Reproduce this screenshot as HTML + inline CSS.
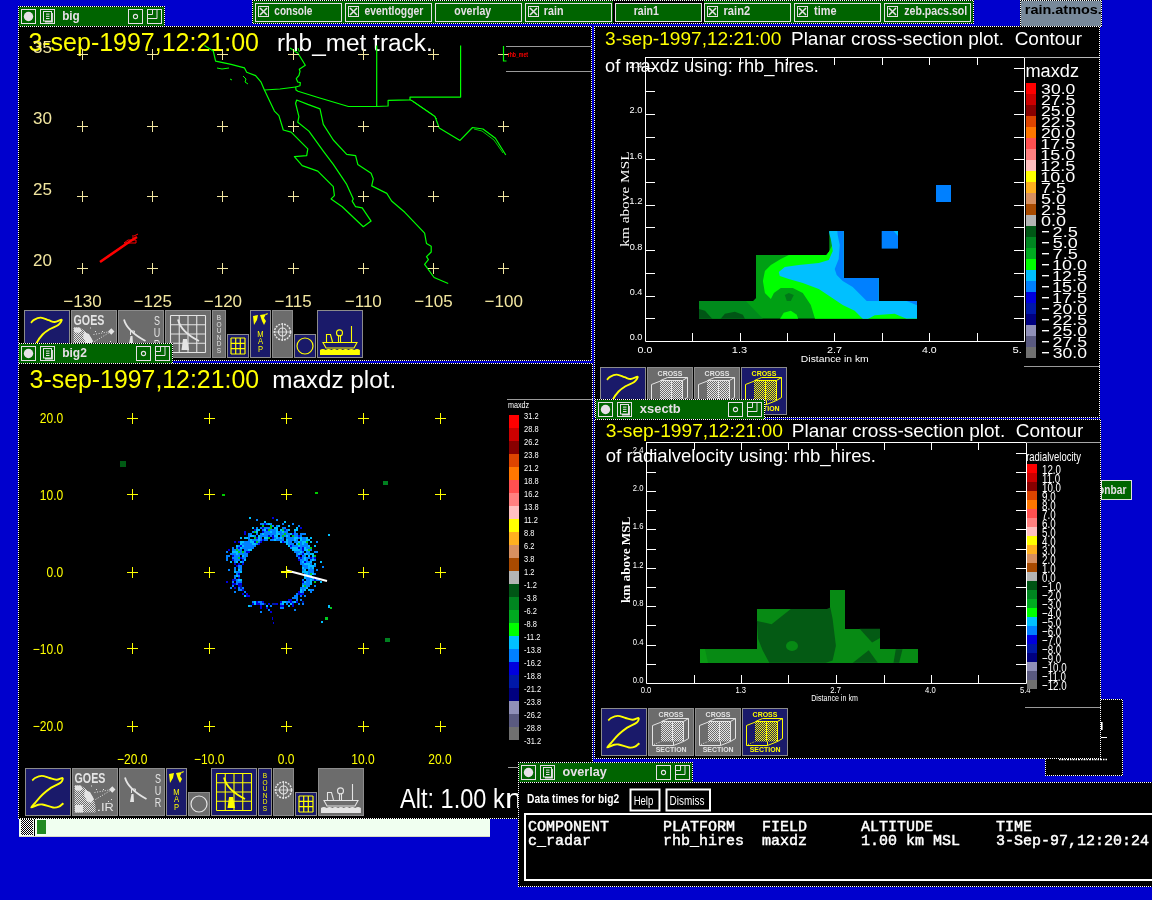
<!DOCTYPE html>
<html><head><meta charset="utf-8"><style>html,body{margin:0;padding:0;background:#0000cd;overflow:hidden}svg{display:block;will-change:transform}</style></head>
<body><svg width="1152" height="900" viewBox="0 0 1152 900">
<defs><pattern id="dots" width="2" height="2" patternUnits="userSpaceOnUse"><rect width="2" height="2" fill="#000"/><rect width="1" height="1" fill="#fff"/><rect x="1" y="1" width="1" height="1" fill="#fff"/></pattern><pattern id="dg" width="2" height="2" patternUnits="userSpaceOnUse"><rect width="1" height="1" fill="#e4e4e4"/><rect x="1" y="1" width="1" height="1" fill="#e4e4e4"/></pattern><pattern id="dy" width="2" height="2" patternUnits="userSpaceOnUse"><rect width="1" height="1" fill="#ffff00"/><rect x="1" y="1" width="1" height="1" fill="#ffff00"/></pattern></defs>
<rect width="1152" height="900" fill="#0000cd"/>
<rect x="252" y="0" width="722" height="24" fill="#006400"/>
<path d="M252 0h722v1h-722zM252 23h722v1h-722zM252 0h1v24h-1zM973 0h1v24h-1z" fill="url(#dots)"/>
<rect x="255.5" y="3.5" width="86" height="18" fill="none" stroke="#e6e0e6" stroke-width="1"/>
<rect x="258.5" y="6.5" width="10" height="10" fill="none" stroke="#e6e0e6" stroke-width="1"/>
<path d="M260 8l7 7M267 8l-7 7" stroke="#e6e0e6" stroke-width="1.6"/>
<text x="0" y="0" font-family="Liberation Sans" font-size="12.5" font-weight="bold" fill="#e6e0e6" transform="translate(274.30 15) scale(0.8065 1)" xml:space="preserve" >console</text>
<rect x="345.5" y="3.5" width="86" height="18" fill="none" stroke="#e6e0e6" stroke-width="1"/>
<rect x="348.5" y="6.5" width="10" height="10" fill="none" stroke="#e6e0e6" stroke-width="1"/>
<path d="M350 8l7 7M357 8l-7 7" stroke="#e6e0e6" stroke-width="1.6"/>
<text x="0" y="0" font-family="Liberation Sans" font-size="12.5" font-weight="bold" fill="#e6e0e6" transform="translate(364.59 15) scale(0.8285 1)" xml:space="preserve" >eventlogger</text>
<rect x="435.5" y="3.5" width="86" height="18" fill="none" stroke="#e6e0e6" stroke-width="1"/>
<text x="0" y="0" font-family="Liberation Sans" font-size="12.5" font-weight="bold" fill="#e6e0e6" transform="translate(454.28 15) scale(0.8439 1)" xml:space="preserve" >overlay</text>
<rect x="525.5" y="3.5" width="86" height="18" fill="none" stroke="#e6e0e6" stroke-width="1"/>
<rect x="528.5" y="6.5" width="10" height="10" fill="none" stroke="#e6e0e6" stroke-width="1"/>
<path d="M530 8l7 7M537 8l-7 7" stroke="#e6e0e6" stroke-width="1.6"/>
<text x="0" y="0" font-family="Liberation Sans" font-size="12.5" font-weight="bold" fill="#e6e0e6" transform="translate(543.85 15) scale(0.8565 1)" xml:space="preserve" >rain</text>
<rect x="615.5" y="3.5" width="86" height="18" fill="none" stroke="#e6e0e6" stroke-width="1"/>
<rect x="614.0" y="2.0" width="89" height="20" fill="none" stroke="#000" stroke-width="2"/>
<rect x="615.5" y="3.5" width="86" height="18" fill="none" stroke="#e6e0e6" stroke-width="1"/>
<text x="0" y="0" font-family="Liberation Sans" font-size="12.5" font-weight="bold" fill="#e6e0e6" transform="translate(633.66 15) scale(0.8454 1)" xml:space="preserve" >rain1</text>
<rect x="704.5" y="3.5" width="86" height="18" fill="none" stroke="#e6e0e6" stroke-width="1"/>
<rect x="707.5" y="6.5" width="10" height="10" fill="none" stroke="#e6e0e6" stroke-width="1"/>
<path d="M709 8l7 7M716 8l-7 7" stroke="#e6e0e6" stroke-width="1.6"/>
<text x="0" y="0" font-family="Liberation Sans" font-size="12.5" font-weight="bold" fill="#e6e0e6" transform="translate(723.52 15) scale(0.8947 1)" xml:space="preserve" >rain2</text>
<rect x="794.5" y="3.5" width="86" height="18" fill="none" stroke="#e6e0e6" stroke-width="1"/>
<rect x="797.5" y="6.5" width="10" height="10" fill="none" stroke="#e6e0e6" stroke-width="1"/>
<path d="M799 8l7 7M806 8l-7 7" stroke="#e6e0e6" stroke-width="1.6"/>
<text x="0" y="0" font-family="Liberation Sans" font-size="12.5" font-weight="bold" fill="#e6e0e6" transform="translate(814.09 15) scale(0.8716 1)" xml:space="preserve" >time</text>
<rect x="884.5" y="3.5" width="86" height="18" fill="none" stroke="#e6e0e6" stroke-width="1"/>
<rect x="887.5" y="6.5" width="10" height="10" fill="none" stroke="#e6e0e6" stroke-width="1"/>
<path d="M889 8l7 7M896 8l-7 7" stroke="#e6e0e6" stroke-width="1.6"/>
<text x="0" y="0" font-family="Liberation Sans" font-size="12.5" font-weight="bold" fill="#e6e0e6" transform="translate(904.28 15) scale(0.8479 1)" xml:space="preserve" >zeb.pacs.sol</text>
<rect x="1020" y="0" width="82" height="27" fill="#778899"/>
<path d="M1020 0h82v1h-82zM1020 26h82v1h-82zM1020 0h1v27h-1zM1101 0h1v27h-1z" fill="url(#dots)"/>
<text x="0" y="0" font-family="Liberation Sans" font-size="12.5" font-weight="bold" fill="#000" transform="translate(1024.79 13.7) scale(1.1569 1)" xml:space="preserve" >rain.atmos.</text>
<rect x="18" y="26" width="574" height="335" fill="#000"/>
<path d="M18 26h574v1h-574zM18 360h574v1h-574zM18 26h1v335h-1zM591 26h1v335h-1z" fill="url(#dots)"/>
<rect x="18" y="6" width="147" height="21" fill="#006400"/>
<path d="M18 6h147v1h-147zM18 26h147v1h-147zM18 6h1v21h-1zM164 6h1v21h-1z" fill="url(#dots)"/>
<rect x="21.5" y="9.5" width="14" height="14" fill="none" stroke="#e6e0e6" stroke-width="1"/>
<circle cx="28.5" cy="16.5" r="4.7" fill="#e6e0e6"/>
<rect x="40.5" y="9.5" width="14" height="14" fill="none" stroke="#e6e0e6" stroke-width="1"/>
<rect x="43.5" y="11.5" width="8" height="9.5" fill="none" stroke="#e6e0e6"/>
<path d="M52.2 13V21.8H45" fill="none" stroke="#e6e0e6" stroke-width="1.4"/>
<rect x="46" y="13.6" width="3.5" height="1" fill="#e6e0e6"/>
<rect x="46" y="15.8" width="3.5" height="1" fill="#e6e0e6"/>
<rect x="46" y="18.0" width="3.5" height="1" fill="#e6e0e6"/>
<text x="0" y="0" font-family="Liberation Sans" font-size="12.5" font-weight="bold" fill="#e6e0e6" transform="translate(62.18 20) scale(0.9412 1)" xml:space="preserve" >big</text>
<rect x="128.5" y="9.5" width="14" height="14" fill="none" stroke="#e6e0e6" stroke-width="1"/>
<circle cx="135.5" cy="16.5" r="2.1" fill="none" stroke="#e6e0e6" stroke-width="1.1"/>
<rect x="147.5" y="9.5" width="14" height="14" fill="none" stroke="#e6e0e6" stroke-width="1"/>
<path d="M148 18.5h9v-9M148 14.5h4.5v-5" fill="none" stroke="#e6e0e6"/>
<text x="0" y="0" font-family="Liberation Sans" font-size="25" font-weight="normal" fill="#ffff00" transform="translate(28.40 51) scale(0.9993 1)" xml:space="preserve" >3-sep-1997,12:21:00</text>
<text x="0" y="0" font-family="Liberation Sans" font-size="23.5" font-weight="normal" fill="#fff" transform="translate(276.89 50.5) scale(1.0382 1)" xml:space="preserve" >rhb_met track.</text>
<path d="M204.4 45.6 L213.3 51.1 L215.6 61.1 L231.1 64.4 L244.4 67.8 L246.7 72.2 L255.6 75.6 L261.1 82.2 L264.4 90.0 L274.4 111.1 L278.9 115.6 L283.3 130.0 L291.1 132.2 L307.8 148.9 L306.7 155.6 L294.4 156.7 L302.2 165.6 L317.8 171.1 L333.3 186.7 L334.4 195.6 L331.1 198.9 L342.2 206.7 L363.3 226.7 L371.1 221.1 L362.2 207.8 L355.6 206.7 L352.2 201.1 L353.3 198.9 L346.7 184.4 L333.3 164.4 L323.3 151.1 L308.9 131.1 L297.8 122.2 L298.9 116.7 L295.6 103.3 L296.7 100.0 L307.8 104.4 L320.0 108.9 L323.3 124.4 L333.3 140.0 L346.7 154.4 L355.6 155.6 L357.8 164.4 L371.1 173.3 L373.3 178.9 L371.7 185.9 L386.8 193.4 L391.6 201.0 L404.8 212.3 L424.6 233.1 L426.5 243.5 L431.2 246.3 L431.2 252.0 L426.5 256.7 L428.4 259.6 L424.6 264.3 L434.1 277.5 L448.2 283.5" fill="none" stroke="#00ff00" stroke-width="1.2" stroke-linejoin="round"/>
<path d="M217.0 68.0 L222.0 69.0 L229.0 68.0" fill="none" stroke="#00ff00" stroke-width="1" stroke-linejoin="round"/>
<path d="M230.0 79.0 L232.0 80.0" fill="none" stroke="#00ff00" stroke-width="1" stroke-linejoin="round"/>
<path d="M243.0 76.0 L246.0 79.0 L245.0 82.0 L248.0 84.0" fill="none" stroke="#00ff00" stroke-width="1" stroke-linejoin="round"/>
<path d="M264.4 90.0 L280.0 89.0 L295.7 87.0" fill="none" stroke="#00ff00" stroke-width="1.2" stroke-linejoin="round"/>
<path d="M298.0 48.0 L299.3 51.7" fill="none" stroke="#00ff00" stroke-width="1" stroke-linejoin="round"/>
<path d="M290.0 48.0 L298.0 53.3 L305.3 65.3 L299.3 69.3 L300.0 71.3 L299.0 75.3 L296.3 78.7 L297.7 82.0 L300.3 82.7 L300.0 85.7 L295.7 87.0 L296.0 90.0 L298.0 91.3 L317.3 97.3 L348.4 106.5 L376.7 106.5 L388.1 106.0 L388.1 100.4 L410.0 99.8 L410.0 97.1 L460.6 97.1 L460.6 45.6" fill="none" stroke="#00ff00" stroke-width="1.2" stroke-linejoin="round"/>
<path d="M376.7 45.6 L376.7 106.5" fill="none" stroke="#00ff00" stroke-width="1.2" stroke-linejoin="round"/>
<path d="M410.0 99.8 L412.1 100.8 L435.0 116.5 L439.2 127.9 L460.0 140.4 L472.5 127.5 L483.0 129.0 L495.4 138.3 L505.8 155.0" fill="none" stroke="#00ff00" stroke-width="1.2" stroke-linejoin="round"/>
<path d="M413.0 101.5 L433.0 115.0 L437.0 119.0" fill="none" stroke="#00ff00" stroke-width="0.8" stroke-linejoin="round"/>
<path d="M474.0 129.0 L482.0 131.0 L494.0 140.0 L503.0 153.0" fill="none" stroke="#00ff00" stroke-width="0.8" stroke-linejoin="round"/>
<path d="M77 54.5h11M82.5 49v11" stroke="#f2e6a0" stroke-width="1" fill="none"/>
<path d="M77 126.5h11M82.5 121v11" stroke="#f2e6a0" stroke-width="1" fill="none"/>
<path d="M77 196.5h11M82.5 191v11" stroke="#f2e6a0" stroke-width="1" fill="none"/>
<path d="M77 268.5h11M82.5 263v11" stroke="#f2e6a0" stroke-width="1" fill="none"/>
<path d="M147 54.5h11M152.5 49v11" stroke="#f2e6a0" stroke-width="1" fill="none"/>
<path d="M147 126.5h11M152.5 121v11" stroke="#f2e6a0" stroke-width="1" fill="none"/>
<path d="M147 196.5h11M152.5 191v11" stroke="#f2e6a0" stroke-width="1" fill="none"/>
<path d="M147 268.5h11M152.5 263v11" stroke="#f2e6a0" stroke-width="1" fill="none"/>
<path d="M217 54.5h11M222.5 49v11" stroke="#f2e6a0" stroke-width="1" fill="none"/>
<path d="M217 126.5h11M222.5 121v11" stroke="#f2e6a0" stroke-width="1" fill="none"/>
<path d="M217 196.5h11M222.5 191v11" stroke="#f2e6a0" stroke-width="1" fill="none"/>
<path d="M217 268.5h11M222.5 263v11" stroke="#f2e6a0" stroke-width="1" fill="none"/>
<path d="M288 54.5h11M293.5 49v11" stroke="#f2e6a0" stroke-width="1" fill="none"/>
<path d="M288 126.5h11M293.5 121v11" stroke="#f2e6a0" stroke-width="1" fill="none"/>
<path d="M288 196.5h11M293.5 191v11" stroke="#f2e6a0" stroke-width="1" fill="none"/>
<path d="M288 268.5h11M293.5 263v11" stroke="#f2e6a0" stroke-width="1" fill="none"/>
<path d="M358 54.5h11M363.5 49v11" stroke="#f2e6a0" stroke-width="1" fill="none"/>
<path d="M358 126.5h11M363.5 121v11" stroke="#f2e6a0" stroke-width="1" fill="none"/>
<path d="M358 196.5h11M363.5 191v11" stroke="#f2e6a0" stroke-width="1" fill="none"/>
<path d="M358 268.5h11M363.5 263v11" stroke="#f2e6a0" stroke-width="1" fill="none"/>
<path d="M428 54.5h11M433.5 49v11" stroke="#f2e6a0" stroke-width="1" fill="none"/>
<path d="M428 126.5h11M433.5 121v11" stroke="#f2e6a0" stroke-width="1" fill="none"/>
<path d="M428 196.5h11M433.5 191v11" stroke="#f2e6a0" stroke-width="1" fill="none"/>
<path d="M428 268.5h11M433.5 263v11" stroke="#f2e6a0" stroke-width="1" fill="none"/>
<path d="M498 54.5h11M503.5 49v11" stroke="#f2e6a0" stroke-width="1" fill="none"/>
<path d="M498 126.5h11M503.5 121v11" stroke="#f2e6a0" stroke-width="1" fill="none"/>
<path d="M498 196.5h11M503.5 191v11" stroke="#f2e6a0" stroke-width="1" fill="none"/>
<path d="M498 268.5h11M503.5 263v11" stroke="#f2e6a0" stroke-width="1" fill="none"/>
<text x="52" y="53.0" font-family="Liberation Sans" font-size="17" font-weight="normal" fill="#f2e6a0" text-anchor="end" >35</text>
<text x="52" y="124.0" font-family="Liberation Sans" font-size="17" font-weight="normal" fill="#f2e6a0" text-anchor="end" >30</text>
<text x="52" y="195.0" font-family="Liberation Sans" font-size="17" font-weight="normal" fill="#f2e6a0" text-anchor="end" >25</text>
<text x="52" y="266.0" font-family="Liberation Sans" font-size="17" font-weight="normal" fill="#f2e6a0" text-anchor="end" >20</text>
<text x="82.5" y="307" font-family="Liberation Sans" font-size="17" font-weight="normal" fill="#f2e6a0" text-anchor="middle" >−130</text>
<text x="152.7" y="307" font-family="Liberation Sans" font-size="17" font-weight="normal" fill="#f2e6a0" text-anchor="middle" >−125</text>
<text x="222.9" y="307" font-family="Liberation Sans" font-size="17" font-weight="normal" fill="#f2e6a0" text-anchor="middle" >−120</text>
<text x="293.1" y="307" font-family="Liberation Sans" font-size="17" font-weight="normal" fill="#f2e6a0" text-anchor="middle" >−115</text>
<text x="363.3" y="307" font-family="Liberation Sans" font-size="17" font-weight="normal" fill="#f2e6a0" text-anchor="middle" >−110</text>
<text x="433.5" y="307" font-family="Liberation Sans" font-size="17" font-weight="normal" fill="#f2e6a0" text-anchor="middle" >−105</text>
<text x="503.70000000000005" y="307" font-family="Liberation Sans" font-size="17" font-weight="normal" fill="#f2e6a0" text-anchor="middle" >−100</text>
<path d="M503.5 46v15h3" stroke="#00ff00" fill="none" stroke-width="1.2"/>
<path d="M506 46.5h85M506 71.5h85" stroke="#9a9a9a" stroke-width="1"/>
<text x="0" y="0" font-family="Liberation Sans" font-size="7" font-weight="bold" fill="#ff0000" transform="translate(507.64 57) scale(0.7402 1)" xml:space="preserve" >rhb_met</text>
<path d="M100 262 L129 242 L137 237" stroke="#ff0000" stroke-width="2.6" fill="none"/>
<path d="M124 243h12v-3h-8zM133 240v-5M134 236l4 -2" stroke="#ff0000" stroke-width="1" fill="none"/>
<rect x="24" y="310" width="46" height="48" fill="#1a1a6a"/>
<rect x="24.5" y="310.5" width="45" height="47" fill="none" stroke="#8c8c8c"/>
<g transform="translate(24 310)">
<path d="M7.0 12.8 C7.5 12.3 8.4 10.7 10.0 9.8 C11.6 8.9 14.4 7.5 16.8 7.6 C19.2 7.7 22.3 9.5 24.6 10.2 C26.9 10.9 28.5 12.1 30.7 12.0 C32.9 11.9 37.1 9.3 37.7 9.8 C38.3 10.3 36.2 13.4 34.2 15.0 C32.2 16.6 28.1 17.7 25.5 19.3 C22.9 20.9 20.8 22.2 18.6 24.5 C16.4 26.8 14.3 29.5 12.5 33.2 C10.7 37.0 8.8 44.7 8.0 47.0" fill="none" stroke="#ffff00" stroke-width="1.9" stroke-linejoin="round"/>
</g>
<rect x="71" y="310" width="46" height="48" fill="#6c6c6c"/>
<rect x="71.5" y="310.5" width="45" height="47" fill="none" stroke="#8c8c8c"/>
<text x="0" y="0" font-family="Liberation Sans" font-size="14" font-weight="bold" fill="#e4e4e4" transform="translate(73.57 325) scale(0.7626 1)" xml:space="preserve" >GOES</text>
<g transform="translate(71 310)">
<path d="M2.5 17.5 H8 A 26 26 0 0 1 23.5 44.5 H2.5 Z" fill="url(#dg)"/>
<path d="M3 17.5 H9 L11 21 L7 23 L3 22Z M13 22 L18 24 L22 31 L19 35 L15 33 L12 27Z M3 37 H11 V44.5 H3Z" fill="#e4e4e4"/>
<path d="M22.5 24.5 L40 21.5 M23.5 31.5 L40 21.5" stroke="#e4e4e4" stroke-width="1" stroke-dasharray="1 1.6"/>
<rect x="38" y="19.2" width="4.5" height="4.5" fill="#e4e4e4" transform="rotate(45 40.2 21.5)"/>
<rect x="19" y="17.5" width="1" height="1" fill="#e4e4e4"/>
<rect x="24" y="21" width="1" height="1" fill="#e4e4e4"/>
<rect x="31" y="21" width="1" height="1" fill="#e4e4e4"/>
<rect x="39" y="31" width="1" height="1" fill="#e4e4e4"/>
<rect x="36" y="33" width="1" height="1" fill="#e4e4e4"/>
<rect x="26" y="42" width="1" height="1" fill="#e4e4e4"/>
</g>
<rect x="118" y="310" width="46" height="48" fill="#6c6c6c"/>
<rect x="118.5" y="310.5" width="45" height="47" fill="none" stroke="#8c8c8c"/>
<g transform="translate(118 310)">
<path d="M6 9.5 Q9 21 27.5 31" fill="none" stroke="#e4e4e4" stroke-width="1.8"/>
<path d="M12.5 25 V21 H16.5 L16 24" fill="none" stroke="#e4e4e4" stroke-width="1"/>
<path d="M11 34 L12.5 26 L14.5 26 L15 34 z" fill="#e4e4e4"/>
<text x="0" y="0" font-family="Liberation Sans" font-size="12.5" fill="#e4e4e4" text-anchor="middle" transform="translate(39 15) scale(0.72 1)">S</text>
<text x="0" y="0" font-family="Liberation Sans" font-size="12.5" fill="#e4e4e4" text-anchor="middle" transform="translate(39 27) scale(0.72 1)">U</text>
<text x="0" y="0" font-family="Liberation Sans" font-size="12.5" fill="#e4e4e4" text-anchor="middle" transform="translate(39 39) scale(0.72 1)">R</text>
</g>
<rect x="165" y="310" width="46" height="48" fill="#6c6c6c"/>
<rect x="165.5" y="310.5" width="45" height="47" fill="none" stroke="#8c8c8c"/>
<g transform="translate(165 310)">
<path d="M5.50 5.5V42.5M5.5 5.50H40.5M14.25 5.5V42.5M5.5 14.75H40.5M23.00 5.5V42.5M5.5 24.00H40.5M31.75 5.5V42.5M5.5 33.25H40.5M40.50 5.5V42.5M5.5 42.50H40.5" stroke="#e4e4e4" stroke-width="1.1" fill="none"/>
<path d="M13 9.5 Q16 22 34 31" fill="none" stroke="#e4e4e4" stroke-width="1.8"/>
<path d="M16.5 40 L18 29 L22 29 L24 40z" fill="#e4e4e4"/>
</g>
<rect x="212" y="310" width="14" height="48" fill="#6c6c6c"/>
<rect x="212.5" y="310.5" width="13" height="47" fill="none" stroke="#8c8c8c"/>
<text x="219.0" y="320.0" font-family="Liberation Sans" font-size="6.5" font-weight="normal" fill="#e4e4e4" text-anchor="middle" >B</text>
<text x="219.0" y="326.6" font-family="Liberation Sans" font-size="6.5" font-weight="normal" fill="#e4e4e4" text-anchor="middle" >O</text>
<text x="219.0" y="333.2" font-family="Liberation Sans" font-size="6.5" font-weight="normal" fill="#e4e4e4" text-anchor="middle" >U</text>
<text x="219.0" y="339.8" font-family="Liberation Sans" font-size="6.5" font-weight="normal" fill="#e4e4e4" text-anchor="middle" >N</text>
<text x="219.0" y="346.4" font-family="Liberation Sans" font-size="6.5" font-weight="normal" fill="#e4e4e4" text-anchor="middle" >D</text>
<text x="219.0" y="353.0" font-family="Liberation Sans" font-size="6.5" font-weight="normal" fill="#e4e4e4" text-anchor="middle" >S</text>
<rect x="227" y="334" width="22" height="24" fill="#1a1a6a"/>
<rect x="227.5" y="334.5" width="21" height="23" fill="none" stroke="#8c8c8c"/>
<g transform="translate(227 334)">
<path d="M4.0 4V20M4 4.0H18M8.7 4V20M4 9.3H18M13.3 4V20M4 14.7H18M18.0 4V20M4 20.0H18" stroke="#ffff00" stroke-width="1.2" fill="none"/>
</g>
<rect x="250" y="310" width="21" height="48" fill="#1a1a6a"/>
<rect x="250.5" y="310.5" width="20" height="47" fill="none" stroke="#8c8c8c"/>
<g transform="translate(250 310)">
<path d="M3 6 l5 -1 l-1 5 l-3 5 z M10 5 l6 -1 l-2 4 l2 3 l-2 4 l-2 -4 z M15 4 l3 -1 l-1 2z" fill="#ffff00"/>
<text x="0" y="0" font-family="Liberation Sans" font-size="9.5" fill="#ffff00" text-anchor="middle" transform="translate(10.5 26.5) scale(0.8 1)">M</text>
<text x="0" y="0" font-family="Liberation Sans" font-size="9.5" fill="#ffff00" text-anchor="middle" transform="translate(10.5 34.0) scale(0.8 1)">A</text>
<text x="0" y="0" font-family="Liberation Sans" font-size="9.5" fill="#ffff00" text-anchor="middle" transform="translate(10.5 41.5) scale(0.8 1)">P</text>
</g>
<rect x="272" y="310" width="21" height="48" fill="#6c6c6c"/>
<rect x="272.5" y="310.5" width="20" height="47" fill="none" stroke="#8c8c8c"/>
<circle cx="282.5" cy="332" r="8" fill="none" stroke="#e4e4e4" stroke-width="1.5" stroke-dasharray="2 1"/>
<circle cx="282.5" cy="332" r="4" fill="none" stroke="#e4e4e4" stroke-width="1.2"/>
<path d="M273.5 332h18M282.5 323v18" stroke="#e4e4e4" stroke-width="0.8"/>
<rect x="294" y="334" width="22" height="24" fill="#1a1a6a"/>
<rect x="294.5" y="334.5" width="21" height="23" fill="none" stroke="#8c8c8c"/>
<circle cx="305.0" cy="346.0" r="8.0" fill="none" stroke="#ffff00" stroke-width="1.2"/>
<rect x="317" y="310" width="46" height="48" fill="#1a1a6a"/>
<rect x="317.5" y="310.5" width="45" height="47" fill="none" stroke="#8c8c8c"/>
<g transform="translate(317 310)">
<path d="M6 32.5 H40 L37 38 H9 Z M9.5 32 V24.5 H13.5 L15.5 32 M21.5 26 V32 M23.5 26 V32 M34.5 16 V32" fill="none" stroke="#ffff00" stroke-width="1.1"/>
<circle cx="22.5" cy="22.9" r="3" fill="none" stroke="#ffff00" stroke-width="1.1"/>
<path d="M3 45 V40 q2.8 -2 5.7 0 q2.8 -2 5.7 0 q2.8 -2 5.7 0 q2.8 -2 5.7 0 q2.8 -2 5.7 0 q2.8 -2 5.7 0 q2.8 -2 5.7 0 V45 Z" fill="#ffff00"/>
</g>
<rect x="18" y="363" width="575" height="456" fill="#000"/>
<path d="M18 363h575v1h-575zM18 818h575v1h-575zM18 363h1v456h-1zM592 363h1v456h-1z" fill="url(#dots)"/>
<rect x="18" y="343" width="155" height="21" fill="#006400"/>
<path d="M18 343h155v1h-155zM18 363h155v1h-155zM18 343h1v21h-1zM172 343h1v21h-1z" fill="url(#dots)"/>
<rect x="21.5" y="346.5" width="14" height="14" fill="none" stroke="#e6e0e6" stroke-width="1"/>
<circle cx="28.5" cy="353.5" r="4.7" fill="#e6e0e6"/>
<rect x="40.5" y="346.5" width="14" height="14" fill="none" stroke="#e6e0e6" stroke-width="1"/>
<rect x="43.5" y="348.5" width="8" height="9.5" fill="none" stroke="#e6e0e6"/>
<path d="M52.2 350V358.8H45" fill="none" stroke="#e6e0e6" stroke-width="1.4"/>
<rect x="46" y="350.6" width="3.5" height="1" fill="#e6e0e6"/>
<rect x="46" y="352.8" width="3.5" height="1" fill="#e6e0e6"/>
<rect x="46" y="355.0" width="3.5" height="1" fill="#e6e0e6"/>
<text x="0" y="0" font-family="Liberation Sans" font-size="12.5" font-weight="bold" fill="#e6e0e6" transform="translate(62.16 357) scale(0.9641 1)" xml:space="preserve" >big2</text>
<rect x="136.5" y="346.5" width="14" height="14" fill="none" stroke="#e6e0e6" stroke-width="1"/>
<circle cx="143.5" cy="353.5" r="2.1" fill="none" stroke="#e6e0e6" stroke-width="1.1"/>
<rect x="155.5" y="346.5" width="14" height="14" fill="none" stroke="#e6e0e6" stroke-width="1"/>
<path d="M156 355.5h9v-9M156 351.5h4.5v-5" fill="none" stroke="#e6e0e6"/>
<text x="0" y="0" font-family="Liberation Sans" font-size="25" font-weight="normal" fill="#ffff00" transform="translate(29.61 387.6) scale(0.9950 1)" xml:space="preserve" >3-sep-1997,12:21:00</text>
<text x="0" y="0" font-family="Liberation Sans" font-size="24.5" font-weight="normal" fill="#fff" transform="translate(272.20 387.7) scale(0.9900 1)" xml:space="preserve" >maxdz plot.</text>
<path d="M127 418.5h11M132.5 413v11" stroke="#ffff00" stroke-width="1" fill="none"/>
<path d="M127 494.5h11M132.5 489v11" stroke="#ffff00" stroke-width="1" fill="none"/>
<path d="M127 572.5h11M132.5 567v11" stroke="#ffff00" stroke-width="1" fill="none"/>
<path d="M127 648.5h11M132.5 643v11" stroke="#ffff00" stroke-width="1" fill="none"/>
<path d="M127 726.5h11M132.5 721v11" stroke="#ffff00" stroke-width="1" fill="none"/>
<path d="M204 418.5h11M209.5 413v11" stroke="#ffff00" stroke-width="1" fill="none"/>
<path d="M204 494.5h11M209.5 489v11" stroke="#ffff00" stroke-width="1" fill="none"/>
<path d="M204 572.5h11M209.5 567v11" stroke="#ffff00" stroke-width="1" fill="none"/>
<path d="M204 648.5h11M209.5 643v11" stroke="#ffff00" stroke-width="1" fill="none"/>
<path d="M204 726.5h11M209.5 721v11" stroke="#ffff00" stroke-width="1" fill="none"/>
<path d="M281 418.5h11M286.5 413v11" stroke="#ffff00" stroke-width="1" fill="none"/>
<path d="M281 494.5h11M286.5 489v11" stroke="#ffff00" stroke-width="1" fill="none"/>
<path d="M281 572.5h11M286.5 567v11" stroke="#ffff00" stroke-width="1" fill="none"/>
<path d="M281 648.5h11M286.5 643v11" stroke="#ffff00" stroke-width="1" fill="none"/>
<path d="M281 726.5h11M286.5 721v11" stroke="#ffff00" stroke-width="1" fill="none"/>
<path d="M358 418.5h11M363.5 413v11" stroke="#ffff00" stroke-width="1" fill="none"/>
<path d="M358 494.5h11M363.5 489v11" stroke="#ffff00" stroke-width="1" fill="none"/>
<path d="M358 572.5h11M363.5 567v11" stroke="#ffff00" stroke-width="1" fill="none"/>
<path d="M358 648.5h11M363.5 643v11" stroke="#ffff00" stroke-width="1" fill="none"/>
<path d="M358 726.5h11M363.5 721v11" stroke="#ffff00" stroke-width="1" fill="none"/>
<path d="M435 418.5h11M440.5 413v11" stroke="#ffff00" stroke-width="1" fill="none"/>
<path d="M435 494.5h11M440.5 489v11" stroke="#ffff00" stroke-width="1" fill="none"/>
<path d="M435 572.5h11M440.5 567v11" stroke="#ffff00" stroke-width="1" fill="none"/>
<path d="M435 648.5h11M440.5 643v11" stroke="#ffff00" stroke-width="1" fill="none"/>
<path d="M435 726.5h11M440.5 721v11" stroke="#ffff00" stroke-width="1" fill="none"/>
<text x="0" y="0" font-family="Liberation Sans" font-size="14" fill="#ffff00" text-anchor="end" transform="translate(63.2 423.0) scale(0.86 1)">20.0</text>
<text x="0" y="0" font-family="Liberation Sans" font-size="14" fill="#ffff00" text-anchor="end" transform="translate(63.2 500.0) scale(0.86 1)">10.0</text>
<text x="0" y="0" font-family="Liberation Sans" font-size="14" fill="#ffff00" text-anchor="end" transform="translate(63.2 577.0) scale(0.86 1)">0.0</text>
<text x="0" y="0" font-family="Liberation Sans" font-size="14" fill="#ffff00" text-anchor="end" transform="translate(63.2 654.0) scale(0.86 1)">−10.0</text>
<text x="0" y="0" font-family="Liberation Sans" font-size="14" fill="#ffff00" text-anchor="end" transform="translate(63.2 731.0) scale(0.86 1)">−20.0</text>
<text x="0" y="0" font-family="Liberation Sans" font-size="14" fill="#ffff00" text-anchor="middle" transform="translate(132.3 764) scale(0.86 1)">−20.0</text>
<text x="0" y="0" font-family="Liberation Sans" font-size="14" fill="#ffff00" text-anchor="middle" transform="translate(209.20000000000002 764) scale(0.86 1)">−10.0</text>
<text x="0" y="0" font-family="Liberation Sans" font-size="14" fill="#ffff00" text-anchor="middle" transform="translate(286.1 764) scale(0.86 1)">0.0</text>
<text x="0" y="0" font-family="Liberation Sans" font-size="14" fill="#ffff00" text-anchor="middle" transform="translate(363.0 764) scale(0.86 1)">10.0</text>
<text x="0" y="0" font-family="Liberation Sans" font-size="14" fill="#ffff00" text-anchor="middle" transform="translate(439.90000000000003 764) scale(0.86 1)">20.0</text>
<rect x="120" y="461" width="6" height="6" fill="#005a14"/>
<rect x="222" y="494" width="3" height="2" fill="#00cc00"/>
<rect x="315" y="492" width="3" height="2" fill="#00cc00"/>
<rect x="383" y="481" width="5" height="4" fill="#008020"/>
<rect x="385" y="638" width="5" height="4" fill="#008020"/>
<rect x="249" y="517" width="2" height="2" fill="#00c0ff"/>
<rect x="328" y="534" width="2" height="2" fill="#00c0ff"/>
<rect x="322" y="566" width="2" height="2" fill="#0080ff"/>
<rect x="328" y="605" width="2" height="3" fill="#00c0ff"/>
<rect x="330" y="607" width="2" height="2" fill="#00cc20"/>
<rect x="325" y="617" width="3" height="3" fill="#00cc20"/>
<rect x="321" y="621" width="2" height="2" fill="#00c0ff"/>
<rect x="272" y="617" width="1" height="3" fill="#0000dd"/>
<rect x="273" y="622" width="1" height="2" fill="#0000dd"/>
<rect x="226" y="551.0" width="2" height="2" fill="#0080ff"/><rect x="226" y="555.0" width="2" height="2" fill="#0080ff"/><rect x="226" y="557.0" width="2" height="2" fill="#0080ff"/><rect x="226" y="559.0" width="2" height="2" fill="#0080ff"/><rect x="226" y="581.0" width="2" height="2" fill="#0000dd"/><rect x="228" y="549.0" width="2" height="2" fill="#0000dd"/><rect x="228" y="555.0" width="2" height="2" fill="#0080ff"/><rect x="228" y="569.0" width="2" height="2" fill="#0080ff"/><rect x="230" y="553.0" width="2" height="2" fill="#0080ff"/><rect x="230" y="561.0" width="2" height="2" fill="#00c0ff"/><rect x="230" y="587.0" width="2" height="2" fill="#0080ff"/><rect x="232" y="547.0" width="2" height="2" fill="#0080ff"/><rect x="232" y="549.0" width="2" height="2" fill="#0080ff"/><rect x="232" y="551.0" width="2" height="2" fill="#00c0ff"/><rect x="232" y="553.0" width="2" height="2" fill="#0080ff"/><rect x="232" y="555.0" width="2" height="2" fill="#0000dd"/><rect x="232" y="557.0" width="2" height="2" fill="#0080ff"/><rect x="232" y="559.0" width="2" height="2" fill="#0000dd"/><rect x="232" y="579.0" width="2" height="2" fill="#0000dd"/><rect x="232" y="581.0" width="2" height="2" fill="#0080ff"/><rect x="232" y="583.0" width="2" height="2" fill="#0000dd"/><rect x="232" y="585.0" width="2" height="2" fill="#0080ff"/><rect x="234" y="541.0" width="2" height="2" fill="#0000dd"/><rect x="234" y="549.0" width="2" height="2" fill="#0080ff"/><rect x="234" y="551.0" width="2" height="2" fill="#00c0ff"/><rect x="234" y="553.0" width="2" height="2" fill="#0080ff"/><rect x="234" y="555.0" width="2" height="2" fill="#0080ff"/><rect x="234" y="557.0" width="2" height="2" fill="#0080ff"/><rect x="234" y="559.0" width="2" height="2" fill="#0080ff"/><rect x="234" y="561.0" width="2" height="2" fill="#0080ff"/><rect x="234" y="563.0" width="2" height="2" fill="#0000dd"/><rect x="234" y="567.0" width="2" height="2" fill="#0080ff"/><rect x="234" y="569.0" width="2" height="2" fill="#0080ff"/><rect x="234" y="571.0" width="2" height="2" fill="#00c0ff"/><rect x="234" y="575.0" width="2" height="2" fill="#0080ff"/><rect x="234" y="577.0" width="2" height="2" fill="#0080ff"/><rect x="234" y="579.0" width="2" height="2" fill="#0000dd"/><rect x="234" y="583.0" width="2" height="2" fill="#0000dd"/><rect x="234" y="587.0" width="2" height="2" fill="#0000dd"/><rect x="234" y="591.0" width="2" height="2" fill="#0080ff"/><rect x="236" y="545.0" width="2" height="2" fill="#00c0ff"/><rect x="236" y="547.0" width="2" height="2" fill="#0080ff"/><rect x="236" y="549.0" width="2" height="2" fill="#00cc20"/><rect x="236" y="551.0" width="2" height="2" fill="#00c0ff"/><rect x="236" y="553.0" width="2" height="2" fill="#00c0ff"/><rect x="236" y="555.0" width="2" height="2" fill="#0080ff"/><rect x="236" y="557.0" width="2" height="2" fill="#0080ff"/><rect x="236" y="559.0" width="2" height="2" fill="#0080ff"/><rect x="236" y="561.0" width="2" height="2" fill="#00c0ff"/><rect x="236" y="565.0" width="2" height="2" fill="#0000dd"/><rect x="236" y="571.0" width="2" height="2" fill="#0080ff"/><rect x="236" y="573.0" width="2" height="2" fill="#0080ff"/><rect x="236" y="575.0" width="2" height="2" fill="#00c0ff"/><rect x="236" y="579.0" width="2" height="2" fill="#0080ff"/><rect x="236" y="581.0" width="2" height="2" fill="#0080ff"/><rect x="236" y="583.0" width="2" height="2" fill="#0080ff"/><rect x="238" y="541.0" width="2" height="2" fill="#0000dd"/><rect x="238" y="545.0" width="2" height="2" fill="#0080ff"/><rect x="238" y="547.0" width="2" height="2" fill="#0000dd"/><rect x="238" y="549.0" width="2" height="2" fill="#0080ff"/><rect x="238" y="551.0" width="2" height="2" fill="#00cc20"/><rect x="238" y="553.0" width="2" height="2" fill="#0080ff"/><rect x="238" y="555.0" width="2" height="2" fill="#0080ff"/><rect x="238" y="557.0" width="2" height="2" fill="#00cc20"/><rect x="238" y="559.0" width="2" height="2" fill="#0080ff"/><rect x="238" y="563.0" width="2" height="2" fill="#0000dd"/><rect x="238" y="565.0" width="2" height="2" fill="#0080ff"/><rect x="238" y="567.0" width="2" height="2" fill="#0080ff"/><rect x="238" y="569.0" width="2" height="2" fill="#00c0ff"/><rect x="238" y="571.0" width="2" height="2" fill="#0080ff"/><rect x="238" y="573.0" width="2" height="2" fill="#0000dd"/><rect x="238" y="575.0" width="2" height="2" fill="#0080ff"/><rect x="238" y="577.0" width="2" height="2" fill="#0000dd"/><rect x="238" y="579.0" width="2" height="2" fill="#00c0ff"/><rect x="238" y="581.0" width="2" height="2" fill="#0080ff"/><rect x="238" y="583.0" width="2" height="2" fill="#0000dd"/><rect x="238" y="585.0" width="2" height="2" fill="#0000dd"/><rect x="238" y="587.0" width="2" height="2" fill="#0080ff"/><rect x="238" y="589.0" width="2" height="2" fill="#0080ff"/><rect x="240" y="537.0" width="2" height="2" fill="#00c0ff"/><rect x="240" y="541.0" width="2" height="2" fill="#00c0ff"/><rect x="240" y="543.0" width="2" height="2" fill="#00c0ff"/><rect x="240" y="545.0" width="2" height="2" fill="#0000dd"/><rect x="240" y="547.0" width="2" height="2" fill="#00c0ff"/><rect x="240" y="549.0" width="2" height="2" fill="#0080ff"/><rect x="240" y="551.0" width="2" height="2" fill="#0080ff"/><rect x="240" y="553.0" width="2" height="2" fill="#0080ff"/><rect x="240" y="557.0" width="2" height="2" fill="#0000dd"/><rect x="240" y="561.0" width="2" height="2" fill="#00c0ff"/><rect x="240" y="565.0" width="2" height="2" fill="#0080ff"/><rect x="240" y="567.0" width="2" height="2" fill="#0080ff"/><rect x="240" y="569.0" width="2" height="2" fill="#0080ff"/><rect x="240" y="571.0" width="2" height="2" fill="#00c0ff"/><rect x="240" y="579.0" width="2" height="2" fill="#00c0ff"/><rect x="240" y="581.0" width="2" height="2" fill="#0080ff"/><rect x="240" y="583.0" width="2" height="2" fill="#0000dd"/><rect x="240" y="585.0" width="2" height="2" fill="#0018a8"/><rect x="240" y="587.0" width="2" height="2" fill="#0018a8"/><rect x="240" y="589.0" width="2" height="2" fill="#0080ff"/><rect x="242" y="541.0" width="2" height="2" fill="#00c0ff"/><rect x="242" y="543.0" width="2" height="2" fill="#0080ff"/><rect x="242" y="545.0" width="2" height="2" fill="#00c0ff"/><rect x="242" y="547.0" width="2" height="2" fill="#0080ff"/><rect x="242" y="551.0" width="2" height="2" fill="#00cc20"/><rect x="242" y="553.0" width="2" height="2" fill="#0080ff"/><rect x="242" y="555.0" width="2" height="2" fill="#00c0ff"/><rect x="242" y="557.0" width="2" height="2" fill="#0080ff"/><rect x="242" y="559.0" width="2" height="2" fill="#0000dd"/><rect x="242" y="561.0" width="2" height="2" fill="#0080ff"/><rect x="242" y="563.0" width="2" height="2" fill="#0000dd"/><rect x="242" y="587.0" width="2" height="2" fill="#0080ff"/><rect x="242" y="589.0" width="2" height="2" fill="#0000dd"/><rect x="242" y="593.0" width="2" height="2" fill="#0000dd"/><rect x="244" y="531.0" width="2" height="2" fill="#0000dd"/><rect x="244" y="533.0" width="2" height="2" fill="#0000dd"/><rect x="244" y="537.0" width="2" height="2" fill="#00c0ff"/><rect x="244" y="541.0" width="2" height="2" fill="#0080ff"/><rect x="244" y="543.0" width="2" height="2" fill="#0080ff"/><rect x="244" y="545.0" width="2" height="2" fill="#0080ff"/><rect x="244" y="547.0" width="2" height="2" fill="#0080ff"/><rect x="244" y="549.0" width="2" height="2" fill="#0080ff"/><rect x="244" y="551.0" width="2" height="2" fill="#0080ff"/><rect x="244" y="553.0" width="2" height="2" fill="#0080ff"/><rect x="244" y="555.0" width="2" height="2" fill="#0080ff"/><rect x="244" y="557.0" width="2" height="2" fill="#0080ff"/><rect x="244" y="559.0" width="2" height="2" fill="#00c0ff"/><rect x="244" y="591.0" width="2" height="2" fill="#0080ff"/><rect x="244" y="595.0" width="2" height="2" fill="#00c0ff"/><rect x="246" y="537.0" width="2" height="2" fill="#00c0ff"/><rect x="246" y="541.0" width="2" height="2" fill="#0080ff"/><rect x="246" y="543.0" width="2" height="2" fill="#0080ff"/><rect x="246" y="545.0" width="2" height="2" fill="#0080ff"/><rect x="246" y="547.0" width="2" height="2" fill="#0080ff"/><rect x="246" y="549.0" width="2" height="2" fill="#0080ff"/><rect x="246" y="551.0" width="2" height="2" fill="#0000dd"/><rect x="246" y="553.0" width="2" height="2" fill="#0080ff"/><rect x="246" y="555.0" width="2" height="2" fill="#0080ff"/><rect x="246" y="593.0" width="2" height="2" fill="#0000dd"/><rect x="246" y="595.0" width="2" height="2" fill="#0000dd"/><rect x="248" y="533.0" width="2" height="2" fill="#0080ff"/><rect x="248" y="535.0" width="2" height="2" fill="#0080ff"/><rect x="248" y="537.0" width="2" height="2" fill="#0080ff"/><rect x="248" y="539.0" width="2" height="2" fill="#0080ff"/><rect x="248" y="541.0" width="2" height="2" fill="#0080ff"/><rect x="248" y="543.0" width="2" height="2" fill="#0080ff"/><rect x="248" y="545.0" width="2" height="2" fill="#0080ff"/><rect x="248" y="547.0" width="2" height="2" fill="#0080ff"/><rect x="248" y="549.0" width="2" height="2" fill="#00c0ff"/><rect x="248" y="551.0" width="2" height="2" fill="#0000dd"/><rect x="248" y="595.0" width="2" height="2" fill="#0000dd"/><rect x="248" y="605.0" width="2" height="2" fill="#00c0ff"/><rect x="250" y="533.0" width="2" height="2" fill="#0080ff"/><rect x="250" y="535.0" width="2" height="2" fill="#00c0ff"/><rect x="250" y="539.0" width="2" height="2" fill="#00c0ff"/><rect x="250" y="541.0" width="2" height="2" fill="#00c0ff"/><rect x="250" y="543.0" width="2" height="2" fill="#0080ff"/><rect x="250" y="545.0" width="2" height="2" fill="#0080ff"/><rect x="250" y="547.0" width="2" height="2" fill="#0080ff"/><rect x="250" y="549.0" width="2" height="2" fill="#00c0ff"/><rect x="250" y="605.0" width="2" height="2" fill="#0080ff"/><rect x="252" y="527.0" width="2" height="2" fill="#00c0ff"/><rect x="252" y="531.0" width="2" height="2" fill="#0080ff"/><rect x="252" y="535.0" width="2" height="2" fill="#00c0ff"/><rect x="252" y="539.0" width="2" height="2" fill="#0080ff"/><rect x="252" y="541.0" width="2" height="2" fill="#00c0ff"/><rect x="252" y="543.0" width="2" height="2" fill="#00c0ff"/><rect x="252" y="545.0" width="2" height="2" fill="#0080ff"/><rect x="252" y="547.0" width="2" height="2" fill="#0080ff"/><rect x="252" y="601.0" width="2" height="2" fill="#0080ff"/><rect x="252" y="603.0" width="2" height="2" fill="#0000dd"/><rect x="254" y="529.0" width="2" height="2" fill="#0000dd"/><rect x="254" y="531.0" width="2" height="2" fill="#00cc20"/><rect x="254" y="535.0" width="2" height="2" fill="#0080ff"/><rect x="254" y="537.0" width="2" height="2" fill="#00cc20"/><rect x="254" y="539.0" width="2" height="2" fill="#0080ff"/><rect x="254" y="541.0" width="2" height="2" fill="#0000dd"/><rect x="254" y="543.0" width="2" height="2" fill="#00c0ff"/><rect x="254" y="545.0" width="2" height="2" fill="#0080ff"/><rect x="254" y="601.0" width="2" height="2" fill="#00c0ff"/><rect x="254" y="603.0" width="2" height="2" fill="#00c0ff"/><rect x="256" y="519.0" width="2" height="2" fill="#0080ff"/><rect x="256" y="527.0" width="2" height="2" fill="#0080ff"/><rect x="256" y="529.0" width="2" height="2" fill="#00c0ff"/><rect x="256" y="531.0" width="2" height="2" fill="#00c0ff"/><rect x="256" y="533.0" width="2" height="2" fill="#0080ff"/><rect x="256" y="537.0" width="2" height="2" fill="#0000dd"/><rect x="256" y="539.0" width="2" height="2" fill="#0080ff"/><rect x="256" y="541.0" width="2" height="2" fill="#00cc20"/><rect x="256" y="543.0" width="2" height="2" fill="#0080ff"/><rect x="256" y="601.0" width="2" height="2" fill="#0000dd"/><rect x="256" y="603.0" width="2" height="2" fill="#0000dd"/><rect x="258" y="529.0" width="2" height="2" fill="#00c0ff"/><rect x="258" y="535.0" width="2" height="2" fill="#00c0ff"/><rect x="258" y="537.0" width="2" height="2" fill="#00c0ff"/><rect x="258" y="539.0" width="2" height="2" fill="#00c0ff"/><rect x="258" y="541.0" width="2" height="2" fill="#0080ff"/><rect x="258" y="543.0" width="2" height="2" fill="#0000dd"/><rect x="258" y="601.0" width="2" height="2" fill="#0080ff"/><rect x="258" y="603.0" width="2" height="2" fill="#0000dd"/><rect x="260" y="523.0" width="2" height="2" fill="#0080ff"/><rect x="260" y="527.0" width="2" height="2" fill="#0080ff"/><rect x="260" y="533.0" width="2" height="2" fill="#0080ff"/><rect x="260" y="535.0" width="2" height="2" fill="#0080ff"/><rect x="260" y="537.0" width="2" height="2" fill="#0080ff"/><rect x="260" y="539.0" width="2" height="2" fill="#0080ff"/><rect x="260" y="541.0" width="2" height="2" fill="#0000dd"/><rect x="260" y="601.0" width="2" height="2" fill="#0080ff"/><rect x="260" y="603.0" width="2" height="2" fill="#0080ff"/><rect x="260" y="605.0" width="2" height="2" fill="#0000dd"/><rect x="260" y="607.0" width="2" height="2" fill="#0000dd"/><rect x="260" y="611.0" width="2" height="2" fill="#0080ff"/><rect x="262" y="523.0" width="2" height="2" fill="#0080ff"/><rect x="262" y="525.0" width="2" height="2" fill="#00cc20"/><rect x="262" y="527.0" width="2" height="2" fill="#0000dd"/><rect x="262" y="529.0" width="2" height="2" fill="#0080ff"/><rect x="262" y="531.0" width="2" height="2" fill="#0000dd"/><rect x="262" y="533.0" width="2" height="2" fill="#00c0ff"/><rect x="262" y="535.0" width="2" height="2" fill="#0080ff"/><rect x="262" y="539.0" width="2" height="2" fill="#0000dd"/><rect x="262" y="601.0" width="2" height="2" fill="#0000dd"/><rect x="262" y="603.0" width="2" height="2" fill="#0080ff"/><rect x="264" y="521.0" width="2" height="2" fill="#00c0ff"/><rect x="264" y="523.0" width="2" height="2" fill="#0000dd"/><rect x="264" y="527.0" width="2" height="2" fill="#0080ff"/><rect x="264" y="529.0" width="2" height="2" fill="#00c0ff"/><rect x="264" y="531.0" width="2" height="2" fill="#0080ff"/><rect x="264" y="533.0" width="2" height="2" fill="#0080ff"/><rect x="264" y="535.0" width="2" height="2" fill="#0080ff"/><rect x="264" y="537.0" width="2" height="2" fill="#00c0ff"/><rect x="264" y="539.0" width="2" height="2" fill="#0080ff"/><rect x="264" y="603.0" width="2" height="2" fill="#0018a8"/><rect x="266" y="523.0" width="2" height="2" fill="#0080ff"/><rect x="266" y="527.0" width="2" height="2" fill="#0080ff"/><rect x="266" y="529.0" width="2" height="2" fill="#0000dd"/><rect x="266" y="531.0" width="2" height="2" fill="#0080ff"/><rect x="266" y="533.0" width="2" height="2" fill="#0080ff"/><rect x="266" y="535.0" width="2" height="2" fill="#0080ff"/><rect x="266" y="537.0" width="2" height="2" fill="#00c0ff"/><rect x="266" y="539.0" width="2" height="2" fill="#0080ff"/><rect x="266" y="605.0" width="2" height="2" fill="#00c0ff"/><rect x="266" y="607.0" width="2" height="2" fill="#0000dd"/><rect x="268" y="523.0" width="2" height="2" fill="#00c0ff"/><rect x="268" y="527.0" width="2" height="2" fill="#0080ff"/><rect x="268" y="529.0" width="2" height="2" fill="#00cc20"/><rect x="268" y="531.0" width="2" height="2" fill="#0080ff"/><rect x="268" y="533.0" width="2" height="2" fill="#0080ff"/><rect x="268" y="535.0" width="2" height="2" fill="#0000dd"/><rect x="268" y="537.0" width="2" height="2" fill="#00cc20"/><rect x="268" y="603.0" width="2" height="2" fill="#0000dd"/><rect x="268" y="609.0" width="2" height="2" fill="#0080ff"/><rect x="270" y="523.0" width="2" height="2" fill="#0080ff"/><rect x="270" y="525.0" width="2" height="2" fill="#00cc20"/><rect x="270" y="527.0" width="2" height="2" fill="#00cc20"/><rect x="270" y="529.0" width="2" height="2" fill="#0080ff"/><rect x="270" y="531.0" width="2" height="2" fill="#00c0ff"/><rect x="270" y="533.0" width="2" height="2" fill="#0080ff"/><rect x="270" y="535.0" width="2" height="2" fill="#0080ff"/><rect x="270" y="539.0" width="2" height="2" fill="#0080ff"/><rect x="270" y="605.0" width="2" height="2" fill="#0080ff"/><rect x="270" y="611.0" width="2" height="2" fill="#0000dd"/><rect x="272" y="517.0" width="2" height="2" fill="#0000dd"/><rect x="272" y="525.0" width="2" height="2" fill="#0080ff"/><rect x="272" y="529.0" width="2" height="2" fill="#0080ff"/><rect x="272" y="531.0" width="2" height="2" fill="#0080ff"/><rect x="272" y="533.0" width="2" height="2" fill="#0080ff"/><rect x="272" y="535.0" width="2" height="2" fill="#0000dd"/><rect x="272" y="537.0" width="2" height="2" fill="#0000dd"/><rect x="272" y="539.0" width="2" height="2" fill="#0080ff"/><rect x="272" y="603.0" width="2" height="2" fill="#0018a8"/><rect x="274" y="527.0" width="2" height="2" fill="#00c0ff"/><rect x="274" y="529.0" width="2" height="2" fill="#0080ff"/><rect x="274" y="531.0" width="2" height="2" fill="#0080ff"/><rect x="274" y="533.0" width="2" height="2" fill="#0080ff"/><rect x="274" y="535.0" width="2" height="2" fill="#00c0ff"/><rect x="274" y="537.0" width="2" height="2" fill="#0080ff"/><rect x="274" y="539.0" width="2" height="2" fill="#00c0ff"/><rect x="274" y="603.0" width="2" height="2" fill="#0018a8"/><rect x="276" y="519.0" width="2" height="2" fill="#0080ff"/><rect x="276" y="525.0" width="2" height="2" fill="#0080ff"/><rect x="276" y="527.0" width="2" height="2" fill="#00c0ff"/><rect x="276" y="529.0" width="2" height="2" fill="#00c0ff"/><rect x="276" y="531.0" width="2" height="2" fill="#00c0ff"/><rect x="276" y="533.0" width="2" height="2" fill="#00c0ff"/><rect x="276" y="535.0" width="2" height="2" fill="#00c0ff"/><rect x="276" y="537.0" width="2" height="2" fill="#00c0ff"/><rect x="276" y="539.0" width="2" height="2" fill="#0080ff"/><rect x="276" y="603.0" width="2" height="2" fill="#0000dd"/><rect x="278" y="525.0" width="2" height="2" fill="#00c0ff"/><rect x="278" y="531.0" width="2" height="2" fill="#0080ff"/><rect x="278" y="533.0" width="2" height="2" fill="#00c0ff"/><rect x="278" y="537.0" width="2" height="2" fill="#0080ff"/><rect x="278" y="539.0" width="2" height="2" fill="#0080ff"/><rect x="280" y="529.0" width="2" height="2" fill="#00c0ff"/><rect x="280" y="531.0" width="2" height="2" fill="#0080ff"/><rect x="280" y="533.0" width="2" height="2" fill="#0080ff"/><rect x="280" y="535.0" width="2" height="2" fill="#0080ff"/><rect x="280" y="537.0" width="2" height="2" fill="#00c0ff"/><rect x="280" y="539.0" width="2" height="2" fill="#0080ff"/><rect x="280" y="541.0" width="2" height="2" fill="#00c0ff"/><rect x="280" y="601.0" width="2" height="2" fill="#0000dd"/><rect x="280" y="603.0" width="2" height="2" fill="#0080ff"/><rect x="280" y="605.0" width="2" height="2" fill="#0000dd"/><rect x="280" y="607.0" width="2" height="2" fill="#0080ff"/><rect x="282" y="523.0" width="2" height="2" fill="#0080ff"/><rect x="282" y="527.0" width="2" height="2" fill="#0080ff"/><rect x="282" y="529.0" width="2" height="2" fill="#00cc20"/><rect x="282" y="531.0" width="2" height="2" fill="#00c0ff"/><rect x="282" y="533.0" width="2" height="2" fill="#0080ff"/><rect x="282" y="535.0" width="2" height="2" fill="#00cc20"/><rect x="282" y="537.0" width="2" height="2" fill="#0080ff"/><rect x="282" y="539.0" width="2" height="2" fill="#0080ff"/><rect x="282" y="541.0" width="2" height="2" fill="#0000dd"/><rect x="282" y="601.0" width="2" height="2" fill="#00c0ff"/><rect x="282" y="603.0" width="2" height="2" fill="#00c0ff"/><rect x="282" y="605.0" width="2" height="2" fill="#0000dd"/><rect x="282" y="607.0" width="2" height="2" fill="#0080ff"/><rect x="284" y="521.0" width="2" height="2" fill="#00c0ff"/><rect x="284" y="527.0" width="2" height="2" fill="#0080ff"/><rect x="284" y="529.0" width="2" height="2" fill="#0000dd"/><rect x="284" y="531.0" width="2" height="2" fill="#0080ff"/><rect x="284" y="533.0" width="2" height="2" fill="#00cc20"/><rect x="284" y="535.0" width="2" height="2" fill="#0080ff"/><rect x="284" y="541.0" width="2" height="2" fill="#0080ff"/><rect x="284" y="601.0" width="2" height="2" fill="#00c0ff"/><rect x="286" y="529.0" width="2" height="2" fill="#0080ff"/><rect x="286" y="531.0" width="2" height="2" fill="#0080ff"/><rect x="286" y="533.0" width="2" height="2" fill="#0080ff"/><rect x="286" y="535.0" width="2" height="2" fill="#00c0ff"/><rect x="286" y="537.0" width="2" height="2" fill="#0080ff"/><rect x="286" y="539.0" width="2" height="2" fill="#00c0ff"/><rect x="286" y="541.0" width="2" height="2" fill="#00c0ff"/><rect x="286" y="543.0" width="2" height="2" fill="#00c0ff"/><rect x="286" y="601.0" width="2" height="2" fill="#0080ff"/><rect x="286" y="603.0" width="2" height="2" fill="#0080ff"/><rect x="288" y="525.0" width="2" height="2" fill="#00c0ff"/><rect x="288" y="529.0" width="2" height="2" fill="#00c0ff"/><rect x="288" y="533.0" width="2" height="2" fill="#0080ff"/><rect x="288" y="535.0" width="2" height="2" fill="#0080ff"/><rect x="288" y="537.0" width="2" height="2" fill="#0080ff"/><rect x="288" y="539.0" width="2" height="2" fill="#0080ff"/><rect x="288" y="541.0" width="2" height="2" fill="#0080ff"/><rect x="288" y="543.0" width="2" height="2" fill="#0080ff"/><rect x="288" y="545.0" width="2" height="2" fill="#00c0ff"/><rect x="288" y="599.0" width="2" height="2" fill="#0000dd"/><rect x="288" y="601.0" width="2" height="2" fill="#0080ff"/><rect x="288" y="605.0" width="2" height="2" fill="#00c0ff"/><rect x="290" y="533.0" width="2" height="2" fill="#00c0ff"/><rect x="290" y="537.0" width="2" height="2" fill="#0080ff"/><rect x="290" y="539.0" width="2" height="2" fill="#0080ff"/><rect x="290" y="541.0" width="2" height="2" fill="#0080ff"/><rect x="290" y="543.0" width="2" height="2" fill="#0080ff"/><rect x="290" y="545.0" width="2" height="2" fill="#0000dd"/><rect x="290" y="547.0" width="2" height="2" fill="#0080ff"/><rect x="290" y="599.0" width="2" height="2" fill="#0000dd"/><rect x="290" y="601.0" width="2" height="2" fill="#0000dd"/><rect x="290" y="603.0" width="2" height="2" fill="#00c0ff"/><rect x="292" y="523.0" width="2" height="2" fill="#0080ff"/><rect x="292" y="533.0" width="2" height="2" fill="#0000dd"/><rect x="292" y="535.0" width="2" height="2" fill="#00cc20"/><rect x="292" y="537.0" width="2" height="2" fill="#0080ff"/><rect x="292" y="539.0" width="2" height="2" fill="#0080ff"/><rect x="292" y="543.0" width="2" height="2" fill="#0080ff"/><rect x="292" y="545.0" width="2" height="2" fill="#0080ff"/><rect x="292" y="547.0" width="2" height="2" fill="#00c0ff"/><rect x="292" y="549.0" width="2" height="2" fill="#00c0ff"/><rect x="292" y="597.0" width="2" height="2" fill="#0080ff"/><rect x="292" y="601.0" width="2" height="2" fill="#0080ff"/><rect x="292" y="603.0" width="2" height="2" fill="#0000dd"/><rect x="292" y="605.0" width="2" height="2" fill="#0000dd"/><rect x="294" y="529.0" width="2" height="2" fill="#00c0ff"/><rect x="294" y="531.0" width="2" height="2" fill="#0080ff"/><rect x="294" y="533.0" width="2" height="2" fill="#0080ff"/><rect x="294" y="535.0" width="2" height="2" fill="#0080ff"/><rect x="294" y="537.0" width="2" height="2" fill="#00c0ff"/><rect x="294" y="539.0" width="2" height="2" fill="#00c0ff"/><rect x="294" y="541.0" width="2" height="2" fill="#0080ff"/><rect x="294" y="545.0" width="2" height="2" fill="#0080ff"/><rect x="294" y="547.0" width="2" height="2" fill="#00c0ff"/><rect x="294" y="549.0" width="2" height="2" fill="#00c0ff"/><rect x="294" y="551.0" width="2" height="2" fill="#0080ff"/><rect x="294" y="595.0" width="2" height="2" fill="#0080ff"/><rect x="294" y="597.0" width="2" height="2" fill="#0080ff"/><rect x="294" y="601.0" width="2" height="2" fill="#00c0ff"/><rect x="294" y="609.0" width="2" height="2" fill="#0080ff"/><rect x="296" y="527.0" width="2" height="2" fill="#00c0ff"/><rect x="296" y="529.0" width="2" height="2" fill="#00c0ff"/><rect x="296" y="533.0" width="2" height="2" fill="#0080ff"/><rect x="296" y="535.0" width="2" height="2" fill="#0080ff"/><rect x="296" y="537.0" width="2" height="2" fill="#00c0ff"/><rect x="296" y="539.0" width="2" height="2" fill="#0080ff"/><rect x="296" y="541.0" width="2" height="2" fill="#0080ff"/><rect x="296" y="543.0" width="2" height="2" fill="#00c0ff"/><rect x="296" y="545.0" width="2" height="2" fill="#0080ff"/><rect x="296" y="547.0" width="2" height="2" fill="#00c0ff"/><rect x="296" y="549.0" width="2" height="2" fill="#00c0ff"/><rect x="296" y="551.0" width="2" height="2" fill="#0080ff"/><rect x="296" y="553.0" width="2" height="2" fill="#0080ff"/><rect x="296" y="555.0" width="2" height="2" fill="#0080ff"/><rect x="296" y="593.0" width="2" height="2" fill="#0080ff"/><rect x="296" y="595.0" width="2" height="2" fill="#0080ff"/><rect x="296" y="597.0" width="2" height="2" fill="#0080ff"/><rect x="296" y="599.0" width="2" height="2" fill="#0080ff"/><rect x="296" y="601.0" width="2" height="2" fill="#0000dd"/><rect x="298" y="525.0" width="2" height="2" fill="#0080ff"/><rect x="298" y="535.0" width="2" height="2" fill="#0000dd"/><rect x="298" y="537.0" width="2" height="2" fill="#0080ff"/><rect x="298" y="541.0" width="2" height="2" fill="#00c0ff"/><rect x="298" y="543.0" width="2" height="2" fill="#00cc20"/><rect x="298" y="545.0" width="2" height="2" fill="#00c0ff"/><rect x="298" y="547.0" width="2" height="2" fill="#0000dd"/><rect x="298" y="549.0" width="2" height="2" fill="#00c0ff"/><rect x="298" y="551.0" width="2" height="2" fill="#0080ff"/><rect x="298" y="553.0" width="2" height="2" fill="#00c0ff"/><rect x="298" y="555.0" width="2" height="2" fill="#0000dd"/><rect x="298" y="557.0" width="2" height="2" fill="#0080ff"/><rect x="298" y="559.0" width="2" height="2" fill="#0000dd"/><rect x="298" y="591.0" width="2" height="2" fill="#0000dd"/><rect x="298" y="593.0" width="2" height="2" fill="#0000dd"/><rect x="298" y="603.0" width="2" height="2" fill="#0080ff"/><rect x="300" y="527.0" width="2" height="2" fill="#0000dd"/><rect x="300" y="533.0" width="2" height="2" fill="#0080ff"/><rect x="300" y="535.0" width="2" height="2" fill="#0080ff"/><rect x="300" y="537.0" width="2" height="2" fill="#00c0ff"/><rect x="300" y="539.0" width="2" height="2" fill="#00c0ff"/><rect x="300" y="541.0" width="2" height="2" fill="#0080ff"/><rect x="300" y="543.0" width="2" height="2" fill="#0080ff"/><rect x="300" y="545.0" width="2" height="2" fill="#0080ff"/><rect x="300" y="547.0" width="2" height="2" fill="#0080ff"/><rect x="300" y="549.0" width="2" height="2" fill="#0080ff"/><rect x="300" y="551.0" width="2" height="2" fill="#00c0ff"/><rect x="300" y="553.0" width="2" height="2" fill="#0080ff"/><rect x="300" y="557.0" width="2" height="2" fill="#0000dd"/><rect x="300" y="559.0" width="2" height="2" fill="#0080ff"/><rect x="300" y="561.0" width="2" height="2" fill="#0080ff"/><rect x="300" y="563.0" width="2" height="2" fill="#0080ff"/><rect x="300" y="587.0" width="2" height="2" fill="#0080ff"/><rect x="300" y="589.0" width="2" height="2" fill="#00c0ff"/><rect x="300" y="591.0" width="2" height="2" fill="#00c0ff"/><rect x="300" y="593.0" width="2" height="2" fill="#0000dd"/><rect x="300" y="595.0" width="2" height="2" fill="#0080ff"/><rect x="300" y="599.0" width="2" height="2" fill="#0080ff"/><rect x="302" y="533.0" width="2" height="2" fill="#0080ff"/><rect x="302" y="537.0" width="2" height="2" fill="#0080ff"/><rect x="302" y="539.0" width="2" height="2" fill="#0080ff"/><rect x="302" y="541.0" width="2" height="2" fill="#00c0ff"/><rect x="302" y="543.0" width="2" height="2" fill="#00c0ff"/><rect x="302" y="545.0" width="2" height="2" fill="#0080ff"/><rect x="302" y="547.0" width="2" height="2" fill="#0000dd"/><rect x="302" y="549.0" width="2" height="2" fill="#0000dd"/><rect x="302" y="551.0" width="2" height="2" fill="#0080ff"/><rect x="302" y="553.0" width="2" height="2" fill="#0000dd"/><rect x="302" y="555.0" width="2" height="2" fill="#0080ff"/><rect x="302" y="557.0" width="2" height="2" fill="#0080ff"/><rect x="302" y="559.0" width="2" height="2" fill="#0080ff"/><rect x="302" y="561.0" width="2" height="2" fill="#00c0ff"/><rect x="302" y="563.0" width="2" height="2" fill="#0080ff"/><rect x="302" y="565.0" width="2" height="2" fill="#0080ff"/><rect x="302" y="567.0" width="2" height="2" fill="#00c0ff"/><rect x="302" y="569.0" width="2" height="2" fill="#0080ff"/><rect x="302" y="571.0" width="2" height="2" fill="#00c0ff"/><rect x="302" y="579.0" width="2" height="2" fill="#0080ff"/><rect x="302" y="581.0" width="2" height="2" fill="#0000dd"/><rect x="302" y="583.0" width="2" height="2" fill="#0080ff"/><rect x="302" y="585.0" width="2" height="2" fill="#00c0ff"/><rect x="302" y="587.0" width="2" height="2" fill="#0080ff"/><rect x="302" y="589.0" width="2" height="2" fill="#0080ff"/><rect x="302" y="591.0" width="2" height="2" fill="#0080ff"/><rect x="302" y="593.0" width="2" height="2" fill="#0000dd"/><rect x="302" y="601.0" width="2" height="2" fill="#0018a8"/><rect x="302" y="603.0" width="2" height="2" fill="#0080ff"/><rect x="304" y="533.0" width="2" height="2" fill="#0080ff"/><rect x="304" y="537.0" width="2" height="2" fill="#0080ff"/><rect x="304" y="539.0" width="2" height="2" fill="#0080ff"/><rect x="304" y="541.0" width="2" height="2" fill="#00c0ff"/><rect x="304" y="543.0" width="2" height="2" fill="#0080ff"/><rect x="304" y="545.0" width="2" height="2" fill="#0080ff"/><rect x="304" y="547.0" width="2" height="2" fill="#00c0ff"/><rect x="304" y="549.0" width="2" height="2" fill="#00c0ff"/><rect x="304" y="553.0" width="2" height="2" fill="#00c0ff"/><rect x="304" y="555.0" width="2" height="2" fill="#0080ff"/><rect x="304" y="557.0" width="2" height="2" fill="#00c0ff"/><rect x="304" y="559.0" width="2" height="2" fill="#00c0ff"/><rect x="304" y="561.0" width="2" height="2" fill="#0000dd"/><rect x="304" y="563.0" width="2" height="2" fill="#00c0ff"/><rect x="304" y="565.0" width="2" height="2" fill="#0080ff"/><rect x="304" y="567.0" width="2" height="2" fill="#0080ff"/><rect x="304" y="569.0" width="2" height="2" fill="#00c0ff"/><rect x="304" y="571.0" width="2" height="2" fill="#00c0ff"/><rect x="304" y="573.0" width="2" height="2" fill="#0080ff"/><rect x="304" y="575.0" width="2" height="2" fill="#00c0ff"/><rect x="304" y="577.0" width="2" height="2" fill="#00c0ff"/><rect x="304" y="581.0" width="2" height="2" fill="#00c0ff"/><rect x="304" y="583.0" width="2" height="2" fill="#0080ff"/><rect x="304" y="585.0" width="2" height="2" fill="#00cc20"/><rect x="304" y="587.0" width="2" height="2" fill="#0080ff"/><rect x="304" y="589.0" width="2" height="2" fill="#00c0ff"/><rect x="304" y="595.0" width="2" height="2" fill="#0080ff"/><rect x="306" y="537.0" width="2" height="2" fill="#00c0ff"/><rect x="306" y="539.0" width="2" height="2" fill="#00c0ff"/><rect x="306" y="541.0" width="2" height="2" fill="#00cc20"/><rect x="306" y="543.0" width="2" height="2" fill="#0080ff"/><rect x="306" y="545.0" width="2" height="2" fill="#0080ff"/><rect x="306" y="547.0" width="2" height="2" fill="#0080ff"/><rect x="306" y="549.0" width="2" height="2" fill="#00c0ff"/><rect x="306" y="551.0" width="2" height="2" fill="#0080ff"/><rect x="306" y="553.0" width="2" height="2" fill="#00c0ff"/><rect x="306" y="557.0" width="2" height="2" fill="#0080ff"/><rect x="306" y="559.0" width="2" height="2" fill="#0080ff"/><rect x="306" y="561.0" width="2" height="2" fill="#0080ff"/><rect x="306" y="563.0" width="2" height="2" fill="#00c0ff"/><rect x="306" y="565.0" width="2" height="2" fill="#0080ff"/><rect x="306" y="567.0" width="2" height="2" fill="#0080ff"/><rect x="306" y="571.0" width="2" height="2" fill="#00c0ff"/><rect x="306" y="573.0" width="2" height="2" fill="#00c0ff"/><rect x="306" y="575.0" width="2" height="2" fill="#0080ff"/><rect x="306" y="577.0" width="2" height="2" fill="#0080ff"/><rect x="306" y="579.0" width="2" height="2" fill="#0080ff"/><rect x="306" y="581.0" width="2" height="2" fill="#0080ff"/><rect x="306" y="583.0" width="2" height="2" fill="#0080ff"/><rect x="306" y="585.0" width="2" height="2" fill="#0080ff"/><rect x="306" y="587.0" width="2" height="2" fill="#00c0ff"/><rect x="308" y="539.0" width="2" height="2" fill="#00c0ff"/><rect x="308" y="545.0" width="2" height="2" fill="#00c0ff"/><rect x="308" y="547.0" width="2" height="2" fill="#0080ff"/><rect x="308" y="549.0" width="2" height="2" fill="#00cc20"/><rect x="308" y="551.0" width="2" height="2" fill="#0080ff"/><rect x="308" y="553.0" width="2" height="2" fill="#0080ff"/><rect x="308" y="555.0" width="2" height="2" fill="#00c0ff"/><rect x="308" y="557.0" width="2" height="2" fill="#0080ff"/><rect x="308" y="561.0" width="2" height="2" fill="#0080ff"/><rect x="308" y="563.0" width="2" height="2" fill="#00c0ff"/><rect x="308" y="565.0" width="2" height="2" fill="#00c0ff"/><rect x="308" y="567.0" width="2" height="2" fill="#00c0ff"/><rect x="308" y="569.0" width="2" height="2" fill="#0080ff"/><rect x="308" y="571.0" width="2" height="2" fill="#0080ff"/><rect x="308" y="573.0" width="2" height="2" fill="#0080ff"/><rect x="308" y="575.0" width="2" height="2" fill="#00c0ff"/><rect x="308" y="577.0" width="2" height="2" fill="#0080ff"/><rect x="308" y="579.0" width="2" height="2" fill="#0080ff"/><rect x="308" y="581.0" width="2" height="2" fill="#0080ff"/><rect x="308" y="583.0" width="2" height="2" fill="#0080ff"/><rect x="308" y="585.0" width="2" height="2" fill="#0080ff"/><rect x="308" y="589.0" width="2" height="2" fill="#00c0ff"/><rect x="310" y="537.0" width="2" height="2" fill="#00c0ff"/><rect x="310" y="541.0" width="2" height="2" fill="#00c0ff"/><rect x="310" y="547.0" width="2" height="2" fill="#00cc20"/><rect x="310" y="549.0" width="2" height="2" fill="#0080ff"/><rect x="310" y="553.0" width="2" height="2" fill="#00c0ff"/><rect x="310" y="557.0" width="2" height="2" fill="#0000dd"/><rect x="310" y="559.0" width="2" height="2" fill="#0080ff"/><rect x="310" y="561.0" width="2" height="2" fill="#00c0ff"/><rect x="310" y="563.0" width="2" height="2" fill="#0080ff"/><rect x="310" y="565.0" width="2" height="2" fill="#00c0ff"/><rect x="310" y="567.0" width="2" height="2" fill="#0080ff"/><rect x="310" y="569.0" width="2" height="2" fill="#0080ff"/><rect x="310" y="571.0" width="2" height="2" fill="#0080ff"/><rect x="310" y="573.0" width="2" height="2" fill="#00cc20"/><rect x="310" y="575.0" width="2" height="2" fill="#00c0ff"/><rect x="310" y="577.0" width="2" height="2" fill="#0080ff"/><rect x="310" y="579.0" width="2" height="2" fill="#00c0ff"/><rect x="310" y="581.0" width="2" height="2" fill="#00c0ff"/><rect x="310" y="583.0" width="2" height="2" fill="#00c0ff"/><rect x="310" y="589.0" width="2" height="2" fill="#0080ff"/><rect x="310" y="591.0" width="2" height="2" fill="#0080ff"/><rect x="312" y="553.0" width="2" height="2" fill="#00c0ff"/><rect x="312" y="555.0" width="2" height="2" fill="#00c0ff"/><rect x="312" y="557.0" width="2" height="2" fill="#0080ff"/><rect x="312" y="559.0" width="2" height="2" fill="#00c0ff"/><rect x="312" y="565.0" width="2" height="2" fill="#00c0ff"/><rect x="312" y="567.0" width="2" height="2" fill="#00c0ff"/><rect x="312" y="569.0" width="2" height="2" fill="#0080ff"/><rect x="312" y="571.0" width="2" height="2" fill="#0080ff"/><rect x="312" y="573.0" width="2" height="2" fill="#00c0ff"/><rect x="312" y="577.0" width="2" height="2" fill="#00c0ff"/><rect x="312" y="579.0" width="2" height="2" fill="#0080ff"/><rect x="312" y="589.0" width="2" height="2" fill="#0080ff"/><rect x="314" y="545.0" width="2" height="2" fill="#00c0ff"/><rect x="314" y="551.0" width="2" height="2" fill="#0080ff"/><rect x="314" y="555.0" width="2" height="2" fill="#00cc20"/><rect x="314" y="557.0" width="2" height="2" fill="#0000dd"/><rect x="314" y="559.0" width="2" height="2" fill="#0080ff"/><rect x="314" y="563.0" width="2" height="2" fill="#00c0ff"/><rect x="314" y="565.0" width="2" height="2" fill="#0080ff"/><rect x="314" y="573.0" width="2" height="2" fill="#0080ff"/><rect x="314" y="579.0" width="2" height="2" fill="#0000dd"/><rect x="314" y="581.0" width="2" height="2" fill="#00cc20"/><rect x="314" y="585.0" width="2" height="2" fill="#0080ff"/><rect x="316" y="541.0" width="2" height="2" fill="#0080ff"/><rect x="316" y="551.0" width="2" height="2" fill="#0080ff"/><rect x="316" y="569.0" width="2" height="2" fill="#0080ff"/><rect x="316" y="579.0" width="2" height="2" fill="#0080ff"/><rect x="318" y="579.0" width="2" height="2" fill="#0080ff"/><rect x="320" y="561.0" width="2" height="2" fill="#00c0ff"/><rect x="320" y="581.0" width="2" height="2" fill="#00c0ff"/>
<path d="M287 570.5 L327 581" stroke="#fff" stroke-width="2"/>
<path d="M281 571.5h11M286.5 566v11" stroke="#ffff00" stroke-width="1" fill="none"/>
<path d="M507 399.5h86M508 767.5h10" stroke="#9a9a9a" stroke-width="1"/>
<text x="0" y="0" font-family="Liberation Sans" font-size="9" fill="#fff" text-anchor="start" transform="translate(508 408) scale(0.8 1)">maxdz</text>
<rect x="509" y="415" width="10" height="13" fill="#ff0000"/>
<rect x="509" y="428" width="10" height="13" fill="#cc0000"/>
<rect x="509" y="441" width="10" height="13" fill="#880000"/>
<rect x="509" y="454" width="10" height="13" fill="#dd4400"/>
<rect x="509" y="467" width="10" height="13" fill="#ff7700"/>
<rect x="509" y="480" width="10" height="13" fill="#ff5050"/>
<rect x="509" y="493" width="10" height="13" fill="#ff8080"/>
<rect x="509" y="506" width="10" height="13" fill="#ffc0c0"/>
<rect x="509" y="519" width="10" height="13" fill="#ffff00"/>
<rect x="509" y="532" width="10" height="13" fill="#ffb020"/>
<rect x="509" y="545" width="10" height="13" fill="#d89060"/>
<rect x="509" y="558" width="10" height="13" fill="#a84a00"/>
<rect x="509" y="571" width="10" height="13" fill="#b4b4b4"/>
<rect x="509" y="584" width="10" height="13" fill="#005515"/>
<rect x="509" y="597" width="10" height="13" fill="#008520"/>
<rect x="509" y="610" width="10" height="13" fill="#00aa20"/>
<rect x="509" y="623" width="10" height="13" fill="#00ff00"/>
<rect x="509" y="636" width="10" height="13" fill="#00c0ff"/>
<rect x="509" y="649" width="10" height="13" fill="#0080ff"/>
<rect x="509" y="662" width="10" height="13" fill="#0000dd"/>
<rect x="509" y="675" width="10" height="13" fill="#0018a8"/>
<rect x="509" y="688" width="10" height="13" fill="#000080"/>
<rect x="509" y="701" width="10" height="13" fill="#9090b8"/>
<rect x="509" y="714" width="10" height="13" fill="#5a5a80"/>
<rect x="509" y="727" width="10" height="13" fill="#707070"/>
<text x="0" y="0" font-family="Liberation Sans" font-size="8.5" fill="#fff" text-anchor="start" transform="translate(524 419) scale(0.88 1)">31.2</text>
<text x="0" y="0" font-family="Liberation Sans" font-size="8.5" fill="#fff" text-anchor="start" transform="translate(524 432) scale(0.88 1)">28.8</text>
<text x="0" y="0" font-family="Liberation Sans" font-size="8.5" fill="#fff" text-anchor="start" transform="translate(524 445) scale(0.88 1)">26.2</text>
<text x="0" y="0" font-family="Liberation Sans" font-size="8.5" fill="#fff" text-anchor="start" transform="translate(524 458) scale(0.88 1)">23.8</text>
<text x="0" y="0" font-family="Liberation Sans" font-size="8.5" fill="#fff" text-anchor="start" transform="translate(524 471) scale(0.88 1)">21.2</text>
<text x="0" y="0" font-family="Liberation Sans" font-size="8.5" fill="#fff" text-anchor="start" transform="translate(524 484) scale(0.88 1)">18.8</text>
<text x="0" y="0" font-family="Liberation Sans" font-size="8.5" fill="#fff" text-anchor="start" transform="translate(524 497) scale(0.88 1)">16.2</text>
<text x="0" y="0" font-family="Liberation Sans" font-size="8.5" fill="#fff" text-anchor="start" transform="translate(524 510) scale(0.88 1)">13.8</text>
<text x="0" y="0" font-family="Liberation Sans" font-size="8.5" fill="#fff" text-anchor="start" transform="translate(524 523) scale(0.88 1)">11.2</text>
<text x="0" y="0" font-family="Liberation Sans" font-size="8.5" fill="#fff" text-anchor="start" transform="translate(524 536) scale(0.88 1)">8.8</text>
<text x="0" y="0" font-family="Liberation Sans" font-size="8.5" fill="#fff" text-anchor="start" transform="translate(524 549) scale(0.88 1)">6.2</text>
<text x="0" y="0" font-family="Liberation Sans" font-size="8.5" fill="#fff" text-anchor="start" transform="translate(524 562) scale(0.88 1)">3.8</text>
<text x="0" y="0" font-family="Liberation Sans" font-size="8.5" fill="#fff" text-anchor="start" transform="translate(524 575) scale(0.88 1)">1.2</text>
<text x="0" y="0" font-family="Liberation Sans" font-size="8.5" fill="#fff" text-anchor="start" transform="translate(524 588) scale(0.88 1)">-1.2</text>
<text x="0" y="0" font-family="Liberation Sans" font-size="8.5" fill="#fff" text-anchor="start" transform="translate(524 601) scale(0.88 1)">-3.8</text>
<text x="0" y="0" font-family="Liberation Sans" font-size="8.5" fill="#fff" text-anchor="start" transform="translate(524 614) scale(0.88 1)">-6.2</text>
<text x="0" y="0" font-family="Liberation Sans" font-size="8.5" fill="#fff" text-anchor="start" transform="translate(524 627) scale(0.88 1)">-8.8</text>
<text x="0" y="0" font-family="Liberation Sans" font-size="8.5" fill="#fff" text-anchor="start" transform="translate(524 640) scale(0.88 1)">-11.2</text>
<text x="0" y="0" font-family="Liberation Sans" font-size="8.5" fill="#fff" text-anchor="start" transform="translate(524 653) scale(0.88 1)">-13.8</text>
<text x="0" y="0" font-family="Liberation Sans" font-size="8.5" fill="#fff" text-anchor="start" transform="translate(524 666) scale(0.88 1)">-16.2</text>
<text x="0" y="0" font-family="Liberation Sans" font-size="8.5" fill="#fff" text-anchor="start" transform="translate(524 679) scale(0.88 1)">-18.8</text>
<text x="0" y="0" font-family="Liberation Sans" font-size="8.5" fill="#fff" text-anchor="start" transform="translate(524 692) scale(0.88 1)">-21.2</text>
<text x="0" y="0" font-family="Liberation Sans" font-size="8.5" fill="#fff" text-anchor="start" transform="translate(524 705) scale(0.88 1)">-23.8</text>
<text x="0" y="0" font-family="Liberation Sans" font-size="8.5" fill="#fff" text-anchor="start" transform="translate(524 718) scale(0.88 1)">-26.2</text>
<text x="0" y="0" font-family="Liberation Sans" font-size="8.5" fill="#fff" text-anchor="start" transform="translate(524 731) scale(0.88 1)">-28.8</text>
<text x="0" y="0" font-family="Liberation Sans" font-size="8.5" fill="#fff" text-anchor="start" transform="translate(524 744) scale(0.88 1)">-31.2</text>
<rect x="25" y="768" width="46" height="48" fill="#1a1a6a"/>
<rect x="25.5" y="768.5" width="45" height="47" fill="none" stroke="#8c8c8c"/>
<g transform="translate(25 768)">
<path d="M7.2 12.6 C7.7 12.2 8.4 10.8 10.0 10.0 C11.6 9.2 14.3 7.9 16.7 7.9 C19.1 7.9 22.0 9.3 24.5 10.0 C27.0 10.7 29.3 11.8 31.5 11.8 C33.7 11.8 36.8 9.6 37.5 10.0 C38.2 10.4 37.7 12.8 35.8 14.4 C33.9 16.0 29.3 17.6 26.2 19.6 C23.2 21.6 20.2 24.1 17.6 26.5 C15.0 28.9 12.5 32.1 10.6 34.3 C8.7 36.5 6.0 39.0 6.3 39.5 C6.6 40.0 10.5 37.5 12.4 37.0 C14.3 36.5 15.0 36.1 17.6 36.5 C20.2 36.9 25.3 39.1 28.0 39.5 C30.7 39.9 32.3 39.4 34.0 38.7 C35.7 38.0 37.7 35.8 38.4 35.2" fill="none" stroke="#ffff00" stroke-width="1.9" stroke-linejoin="round"/>
</g>
<rect x="72" y="768" width="46" height="48" fill="#6c6c6c"/>
<rect x="72.5" y="768.5" width="45" height="47" fill="none" stroke="#8c8c8c"/>
<text x="0" y="0" font-family="Liberation Sans" font-size="14" font-weight="bold" fill="#e4e4e4" transform="translate(74.57 783) scale(0.7626 1)" xml:space="preserve" >GOES</text>
<g transform="translate(72 768)">
<path d="M2.5 17.5 H8 A 26 26 0 0 1 23.5 44.5 H2.5 Z" fill="url(#dg)"/>
<path d="M3 17.5 H9 L11 21 L7 23 L3 22Z M13 22 L18 24 L22 31 L19 35 L15 33 L12 27Z M3 37 H11 V44.5 H3Z" fill="#e4e4e4"/>
<path d="M22.5 24.5 L40 21.5 M23.5 31.5 L40 21.5" stroke="#e4e4e4" stroke-width="1" stroke-dasharray="1 1.6"/>
<rect x="38" y="19.2" width="4.5" height="4.5" fill="#e4e4e4" transform="rotate(45 40.2 21.5)"/>
<rect x="19" y="17.5" width="1" height="1" fill="#e4e4e4"/>
<rect x="24" y="21" width="1" height="1" fill="#e4e4e4"/>
<rect x="31" y="21" width="1" height="1" fill="#e4e4e4"/>
<rect x="39" y="31" width="1" height="1" fill="#e4e4e4"/>
<rect x="36" y="33" width="1" height="1" fill="#e4e4e4"/>
<rect x="26" y="42" width="1" height="1" fill="#e4e4e4"/>
</g>
<text x="0" y="0" font-family="Liberation Sans" font-size="10" font-weight="normal" fill="#e4e4e4" transform="translate(97.34 810.6) scale(1.2895 1)" xml:space="preserve" >.IR</text>
<rect x="119" y="768" width="46" height="48" fill="#6c6c6c"/>
<rect x="119.5" y="768.5" width="45" height="47" fill="none" stroke="#8c8c8c"/>
<g transform="translate(119 768)">
<path d="M6 9.5 Q9 21 27.5 31" fill="none" stroke="#e4e4e4" stroke-width="1.8"/>
<path d="M12.5 25 V21 H16.5 L16 24" fill="none" stroke="#e4e4e4" stroke-width="1"/>
<path d="M11 34 L12.5 26 L14.5 26 L15 34 z" fill="#e4e4e4"/>
<text x="0" y="0" font-family="Liberation Sans" font-size="12.5" fill="#e4e4e4" text-anchor="middle" transform="translate(39 15) scale(0.72 1)">S</text>
<text x="0" y="0" font-family="Liberation Sans" font-size="12.5" fill="#e4e4e4" text-anchor="middle" transform="translate(39 27) scale(0.72 1)">U</text>
<text x="0" y="0" font-family="Liberation Sans" font-size="12.5" fill="#e4e4e4" text-anchor="middle" transform="translate(39 39) scale(0.72 1)">R</text>
</g>
<rect x="166" y="768" width="21" height="48" fill="#1a1a6a"/>
<rect x="166.5" y="768.5" width="20" height="47" fill="none" stroke="#8c8c8c"/>
<g transform="translate(166 768)">
<path d="M3 6 l5 -1 l-1 5 l-3 5 z M10 5 l6 -1 l-2 4 l2 3 l-2 4 l-2 -4 z M15 4 l3 -1 l-1 2z" fill="#ffff00"/>
<text x="0" y="0" font-family="Liberation Sans" font-size="9.5" fill="#ffff00" text-anchor="middle" transform="translate(10.5 26.5) scale(0.8 1)">M</text>
<text x="0" y="0" font-family="Liberation Sans" font-size="9.5" fill="#ffff00" text-anchor="middle" transform="translate(10.5 34.0) scale(0.8 1)">A</text>
<text x="0" y="0" font-family="Liberation Sans" font-size="9.5" fill="#ffff00" text-anchor="middle" transform="translate(10.5 41.5) scale(0.8 1)">P</text>
</g>
<rect x="188" y="792" width="22" height="24" fill="#6c6c6c"/>
<rect x="188.5" y="792.5" width="21" height="23" fill="none" stroke="#8c8c8c"/>
<circle cx="199.0" cy="804.0" r="8.0" fill="none" stroke="#e4e4e4" stroke-width="1.2"/>
<rect x="211" y="768" width="46" height="48" fill="#1a1a6a"/>
<rect x="211.5" y="768.5" width="45" height="47" fill="none" stroke="#8c8c8c"/>
<g transform="translate(211 768)">
<path d="M5.50 5.5V42.5M5.5 5.50H40.5M14.25 5.5V42.5M5.5 14.75H40.5M23.00 5.5V42.5M5.5 24.00H40.5M31.75 5.5V42.5M5.5 33.25H40.5M40.50 5.5V42.5M5.5 42.50H40.5" stroke="#ffff00" stroke-width="1.1" fill="none"/>
<path d="M13 9.5 Q16 22 34 31" fill="none" stroke="#ffff00" stroke-width="1.8"/>
<path d="M16.5 40 L18 29 L22 29 L24 40z" fill="#ffff00"/>
</g>
<rect x="258" y="768" width="14" height="48" fill="#1a1a6a"/>
<rect x="258.5" y="768.5" width="13" height="47" fill="none" stroke="#8c8c8c"/>
<text x="265.0" y="778.0" font-family="Liberation Sans" font-size="6.5" font-weight="normal" fill="#ffff00" text-anchor="middle" >B</text>
<text x="265.0" y="784.6" font-family="Liberation Sans" font-size="6.5" font-weight="normal" fill="#ffff00" text-anchor="middle" >O</text>
<text x="265.0" y="791.2" font-family="Liberation Sans" font-size="6.5" font-weight="normal" fill="#ffff00" text-anchor="middle" >U</text>
<text x="265.0" y="797.8" font-family="Liberation Sans" font-size="6.5" font-weight="normal" fill="#ffff00" text-anchor="middle" >N</text>
<text x="265.0" y="804.4" font-family="Liberation Sans" font-size="6.5" font-weight="normal" fill="#ffff00" text-anchor="middle" >D</text>
<text x="265.0" y="811.0" font-family="Liberation Sans" font-size="6.5" font-weight="normal" fill="#ffff00" text-anchor="middle" >S</text>
<rect x="273" y="768" width="21" height="48" fill="#6c6c6c"/>
<rect x="273.5" y="768.5" width="20" height="47" fill="none" stroke="#8c8c8c"/>
<circle cx="283.5" cy="790" r="8" fill="none" stroke="#e4e4e4" stroke-width="1.5" stroke-dasharray="2 1"/>
<circle cx="283.5" cy="790" r="4" fill="none" stroke="#e4e4e4" stroke-width="1.2"/>
<path d="M274.5 790h18M283.5 781v18" stroke="#e4e4e4" stroke-width="0.8"/>
<rect x="295" y="792" width="22" height="24" fill="#1a1a6a"/>
<rect x="295.5" y="792.5" width="21" height="23" fill="none" stroke="#8c8c8c"/>
<g transform="translate(295 792)">
<path d="M4.0 4V20M4 4.0H18M8.7 4V20M4 9.3H18M13.3 4V20M4 14.7H18M18.0 4V20M4 20.0H18" stroke="#ffff00" stroke-width="1.2" fill="none"/>
</g>
<rect x="318" y="768" width="46" height="48" fill="#6c6c6c"/>
<rect x="318.5" y="768.5" width="45" height="47" fill="none" stroke="#8c8c8c"/>
<g transform="translate(318 768)">
<path d="M6 32.5 H40 L37 38 H9 Z M9.5 32 V24.5 H13.5 L15.5 32 M21.5 26 V32 M23.5 26 V32 M34.5 16 V32" fill="none" stroke="#e4e4e4" stroke-width="1.1"/>
<circle cx="22.5" cy="22.9" r="3" fill="none" stroke="#e4e4e4" stroke-width="1.1"/>
<path d="M3 45 V40 q2.8 -2 5.7 0 q2.8 -2 5.7 0 q2.8 -2 5.7 0 q2.8 -2 5.7 0 q2.8 -2 5.7 0 q2.8 -2 5.7 0 q2.8 -2 5.7 0 V45 Z" fill="#e4e4e4"/>
</g>
<text x="0" y="0" font-family="Liberation Sans" font-size="27" font-weight="normal" fill="#fff" transform="translate(400.00 807.8) scale(0.8722 1)" xml:space="preserve" >Alt: 1.00 k</text>
<text x="0" y="0" font-family="Liberation Sans" font-size="27" font-weight="normal" fill="#fff" transform="translate(504.92 807.8) scale(1.2063 1)" xml:space="preserve" >m</text>
<rect x="19" y="818" width="471" height="19" fill="#f0fff0"/>
<rect x="19" y="836" width="471" height="1" fill="#d8d8c8"/>
<pattern id="chk" width="2" height="2" patternUnits="userSpaceOnUse"><rect width="2" height="2" fill="#fff"/><rect width="1" height="1" fill="#000"/><rect x="1" y="1" width="1" height="1" fill="#000"/></pattern>
<rect x="21" y="819" width="12" height="16" fill="url(#chk)"/>
<rect x="34" y="819" width="1" height="17" fill="#000"/>
<rect x="37" y="820" width="9" height="14" fill="#228b22"/>
<rect x="19" y="818" width="471" height="1" fill="url(#dots)"/>
<rect x="594" y="26" width="506" height="392" fill="#000"/>
<path d="M594 26h506v1h-506zM594 417h506v1h-506zM594 26h1v392h-1zM1099 26h1v392h-1z" fill="url(#dots)"/>
<text x="0" y="0" font-family="Liberation Sans" font-size="17.5" font-weight="normal" fill="#ffff00" transform="translate(605.04 44.6) scale(1.0923 1)" xml:space="preserve" >3-sep-1997,12:21:00</text>
<text x="0" y="0" font-family="Liberation Sans" font-size="17.5" font-weight="normal" fill="#fff" transform="translate(790.98 44.8) scale(1.0855 1)" xml:space="preserve" >Planar cross-section plot.  Contour</text>
<clipPath id="c1"><path d="M699.0 318.8 L699.0 300.9 L752.9 300.9 L755.9 297.9 L755.9 254.9 L825.8 254.9 L829.2 251.0 L829.2 231.0 L843.7 231.0 L843.7 277.9 L878.7 277.9 L878.7 300.9 L917.0 300.9 L917.0 318.8Z"/></clipPath>
<g clip-path="url(#c1)">
<path d="M699.0 318.8 L699.0 300.9 L752.9 300.9 L755.9 297.9 L755.9 254.9 L825.8 254.9 L829.2 251.0 L829.2 231.0 L843.7 231.0 L843.7 277.9 L878.7 277.9 L878.7 300.9 L917.0 300.9 L917.0 318.8Z" fill="#00a014"/>
<path d="M695.0 300.9 L745.9 300.9 L762.9 318.8 L695.0 320.8Z" fill="#008a1c"/>
<path d="M788.8 254.9 L826.8 254.9 L829.8 250.0 L832.8 244.0 L832.8 225.0 L934.6 225.0 L934.6 324.8 L816.8 324.8 L810.8 304.9 L802.8 292.9 L792.8 287.9 L780.8 287.9 L773.9 292.9 L770.9 298.9 L764.9 292.9 L762.9 280.9 L764.9 270.9 L770.9 264.9 L780.8 258.9Z" fill="#00ff00"/>
<path d="M778.8 320.8 L783.8 312.8 L790.8 310.8 L796.8 314.8 L798.8 320.8Z" fill="#00ff00"/>
<path d="M778.8 271.9 L784.8 266.9 L798.8 264.9 L818.8 262.9 L828.8 259.9 L832.8 251.0 L830.8 239.0 L826.8 225.0 L934.6 225.0 L934.6 300.9 L917.0 318.8 L906.6 318.8 L894.6 313.8 L874.7 315.2 L864.7 320.8 L861.7 317.8 L854.7 310.8 L842.7 304.9 L830.8 296.9 L818.8 288.9 L802.8 282.9 L788.8 278.9 L779.8 275.9Z" fill="#00c0ff"/>
<path d="M836.7 225.0 L934.6 225.0 L934.6 300.9 L866.7 300.9 L858.7 292.9 L852.7 286.9 L842.7 280.9 L836.7 274.9 L834.7 268.9 L838.7 258.9 L839.7 245.0 L837.7 235.0Z" fill="#0080ff"/>
<path d="M906.6 300.9 L934.6 300.9 L934.6 312.8Z" fill="#0080ff"/>
<path d="M784.8 294.9 L788.8 292.9 L793.8 294.9 L790.8 300.9 L786.8 300.9Z" fill="#007818"/>
<path d="M695.0 307.9 L705.0 310.8 L714.0 320.8 L695.0 320.8Z" fill="#005515"/>
<path d="M719.0 320.8 L724.9 313.8 L734.9 311.8 L742.9 314.8 L745.9 320.8Z" fill="#005515"/>
</g>
<path d="M881.7 231.0 L898.0 231.0 L898.0 248.6 L881.7 248.6Z" fill="#0080ff"/>
<path d="M893.6 231.0 L898.0 231.0 L898.0 236.0Z" fill="#00c0ff"/>
<rect x="936" y="185" width="15" height="17" fill="#0080ff"/>
<path d="M645 318.5h10M1024 318.5h-10M645 296.5h10M1024 296.5h-10M645 273.5h10M1024 273.5h-10M645 250.5h10M1024 250.5h-10M645 227.5h10M1024 227.5h-10M645 205.5h10M1024 205.5h-10M645 182.5h10M1024 182.5h-10M645 159.5h10M1024 159.5h-10M645 137.5h10M1024 137.5h-10M645 114.5h10M1024 114.5h-10M645 91.5h10M1024 91.5h-10M645 68.5h10M1024 68.5h-10M692.5 341v-8M692.5 57v8M740.5 341v-8M740.5 57v8M787.5 341v-8M787.5 57v8M834.5 341v-8M834.5 57v8M882.5 341v-8M882.5 57v8M929.5 341v-8M929.5 57v8M977.5 341v-8M977.5 57v8M645.5 57V341.5H1024.5V57.5H645" stroke="#fff" stroke-width="1" fill="none"/>
<path d="M1024 57.5h75" stroke="#b8b8b8" stroke-width="1"/>
<path d="M1024 366.5h76" stroke="#9a9a9a" stroke-width="1"/>
<text x="0" y="0" font-family="Liberation Sans" font-size="8.5" font-weight="normal" fill="#fff" transform="translate(629.54 68) scale(1.0777 1)" xml:space="preserve" >2.4</text>
<text x="0" y="0" font-family="Liberation Sans" font-size="8.5" font-weight="normal" fill="#fff" transform="translate(629.54 113) scale(1.0860 1)" xml:space="preserve" >2.0</text>
<text x="0" y="0" font-family="Liberation Sans" font-size="8.5" font-weight="normal" fill="#fff" transform="translate(629.24 159) scale(1.1204 1)" xml:space="preserve" >1.6</text>
<text x="0" y="0" font-family="Liberation Sans" font-size="8.5" font-weight="normal" fill="#fff" transform="translate(629.24 204) scale(1.1204 1)" xml:space="preserve" >1.2</text>
<text x="0" y="0" font-family="Liberation Sans" font-size="8.5" font-weight="normal" fill="#fff" transform="translate(629.63 250) scale(1.0860 1)" xml:space="preserve" >0.8</text>
<text x="0" y="0" font-family="Liberation Sans" font-size="8.5" font-weight="normal" fill="#fff" transform="translate(629.64 295) scale(1.0695 1)" xml:space="preserve" >0.4</text>
<text x="0" y="0" font-family="Liberation Sans" font-size="8.5" font-weight="normal" fill="#fff" transform="translate(629.63 340) scale(1.0777 1)" xml:space="preserve" >0.0</text>
<text x="0" y="0" font-family="Liberation Sans" font-size="9.5" font-weight="normal" fill="#fff" transform="translate(637.57 353) scale(1.1249 1)" xml:space="preserve" >0.0</text>
<text x="0" y="0" font-family="Liberation Sans" font-size="9.5" font-weight="normal" fill="#fff" transform="translate(731.86 353) scale(1.1696 1)" xml:space="preserve" >1.3</text>
<text x="0" y="0" font-family="Liberation Sans" font-size="9.5" font-weight="normal" fill="#fff" transform="translate(826.96 353) scale(1.1424 1)" xml:space="preserve" >2.7</text>
<text x="0" y="0" font-family="Liberation Sans" font-size="9.5" font-weight="normal" fill="#fff" transform="translate(922.04 353) scale(1.1080 1)" xml:space="preserve" >4.0</text>
<text x="0" y="0" font-family="Liberation Sans" font-size="9.5" font-weight="normal" fill="#fff" transform="translate(1012.55 353) scale(1.1861 1)" xml:space="preserve" >5.</text>
<text x="0" y="0" font-family="Liberation Sans" font-size="9.5" font-weight="normal" fill="#fff" transform="translate(800.87 361.7) scale(1.0904 1)" xml:space="preserve" >Distance in km</text>
<text x="0" y="0" font-family="Liberation Serif" font-size="12.5" fill="#fff" transform="translate(628.7 246.7) rotate(-90) scale(1.2248 1)">km above MSL</text>
<text x="0" y="0" font-family="Liberation Sans" font-size="17.5" font-weight="normal" fill="#fff" transform="translate(605.07 72) scale(1.0429 1)" xml:space="preserve" >of maxdz using: rhb_hires.</text>
<text x="0" y="0" font-family="Liberation Sans" font-size="18" font-weight="normal" fill="#fff" transform="translate(1025.43 77.3) scale(1.0110 1)" xml:space="preserve" >maxdz</text>
<rect x="1026" y="83" width="10" height="11" fill="#ff0000"/>
<rect x="1026" y="94" width="10" height="11" fill="#cc0000"/>
<rect x="1026" y="105" width="10" height="11" fill="#880000"/>
<rect x="1026" y="116" width="10" height="11" fill="#dd4400"/>
<rect x="1026" y="127" width="10" height="11" fill="#ff7700"/>
<rect x="1026" y="138" width="10" height="11" fill="#ff5050"/>
<rect x="1026" y="149" width="10" height="11" fill="#ff8080"/>
<rect x="1026" y="160" width="10" height="11" fill="#ffc0c0"/>
<rect x="1026" y="171" width="10" height="11" fill="#ffff00"/>
<rect x="1026" y="182" width="10" height="11" fill="#ffb020"/>
<rect x="1026" y="193" width="10" height="11" fill="#d89060"/>
<rect x="1026" y="204" width="10" height="11" fill="#a84a00"/>
<rect x="1026" y="215" width="10" height="11" fill="#b4b4b4"/>
<rect x="1026" y="226" width="10" height="11" fill="#005515"/>
<rect x="1026" y="237" width="10" height="11" fill="#008520"/>
<rect x="1026" y="248" width="10" height="11" fill="#00aa20"/>
<rect x="1026" y="259" width="10" height="11" fill="#00ff00"/>
<rect x="1026" y="270" width="10" height="11" fill="#00c0ff"/>
<rect x="1026" y="281" width="10" height="11" fill="#0080ff"/>
<rect x="1026" y="292" width="10" height="11" fill="#0000dd"/>
<rect x="1026" y="303" width="10" height="11" fill="#0018a8"/>
<rect x="1026" y="314" width="10" height="11" fill="#000080"/>
<rect x="1026" y="325" width="10" height="11" fill="#9090b8"/>
<rect x="1026" y="336" width="10" height="11" fill="#5a5a80"/>
<rect x="1026" y="347" width="10" height="11" fill="#707070"/>
<text x="0" y="0" font-family="Liberation Sans" font-size="15.5" font-weight="normal" fill="#fff" transform="translate(1041.10 94) scale(1.1351 1)" xml:space="preserve" >30.0</text>
<text x="0" y="0" font-family="Liberation Sans" font-size="15.5" font-weight="normal" fill="#fff" transform="translate(1040.92 105) scale(1.1412 1)" xml:space="preserve" >27.5</text>
<text x="0" y="0" font-family="Liberation Sans" font-size="15.5" font-weight="normal" fill="#fff" transform="translate(1040.92 116) scale(1.1412 1)" xml:space="preserve" >25.0</text>
<text x="0" y="0" font-family="Liberation Sans" font-size="15.5" font-weight="normal" fill="#fff" transform="translate(1040.92 127) scale(1.1412 1)" xml:space="preserve" >22.5</text>
<text x="0" y="0" font-family="Liberation Sans" font-size="15.5" font-weight="normal" fill="#fff" transform="translate(1040.92 138) scale(1.1412 1)" xml:space="preserve" >20.0</text>
<text x="0" y="0" font-family="Liberation Sans" font-size="15.5" font-weight="normal" fill="#fff" transform="translate(1040.36 149) scale(1.1599 1)" xml:space="preserve" >17.5</text>
<text x="0" y="0" font-family="Liberation Sans" font-size="15.5" font-weight="normal" fill="#fff" transform="translate(1040.36 160) scale(1.1599 1)" xml:space="preserve" >15.0</text>
<text x="0" y="0" font-family="Liberation Sans" font-size="15.5" font-weight="normal" fill="#fff" transform="translate(1040.36 171) scale(1.1599 1)" xml:space="preserve" >12.5</text>
<text x="0" y="0" font-family="Liberation Sans" font-size="15.5" font-weight="normal" fill="#fff" transform="translate(1040.36 182) scale(1.1599 1)" xml:space="preserve" >10.0</text>
<text x="0" y="0" font-family="Liberation Sans" font-size="15.5" font-weight="normal" fill="#fff" transform="translate(1040.89 193) scale(1.1712 1)" xml:space="preserve" >7.5</text>
<text x="0" y="0" font-family="Liberation Sans" font-size="15.5" font-weight="normal" fill="#fff" transform="translate(1041.08 204) scale(1.1623 1)" xml:space="preserve" >5.0</text>
<text x="0" y="0" font-family="Liberation Sans" font-size="15.5" font-weight="normal" fill="#fff" transform="translate(1040.89 215) scale(1.1712 1)" xml:space="preserve" >2.5</text>
<text x="0" y="0" font-family="Liberation Sans" font-size="15.5" font-weight="normal" fill="#fff" transform="translate(1041.08 226) scale(1.1623 1)" xml:space="preserve" >0.0</text>
<rect x="1042" y="231" width="7" height="1.4" fill="#fff"/>
<text x="0" y="0" font-family="Liberation Sans" font-size="15.5" font-weight="normal" fill="#fff" transform="translate(1052.59 237) scale(1.1712 1)" xml:space="preserve" >2.5</text>
<rect x="1042" y="242" width="7" height="1.4" fill="#fff"/>
<text x="0" y="0" font-family="Liberation Sans" font-size="15.5" font-weight="normal" fill="#fff" transform="translate(1052.78 248) scale(1.1623 1)" xml:space="preserve" >5.0</text>
<rect x="1042" y="253" width="7" height="1.4" fill="#fff"/>
<text x="0" y="0" font-family="Liberation Sans" font-size="15.5" font-weight="normal" fill="#fff" transform="translate(1052.59 259) scale(1.1712 1)" xml:space="preserve" >7.5</text>
<rect x="1042" y="264" width="7" height="1.4" fill="#fff"/>
<text x="0" y="0" font-family="Liberation Sans" font-size="15.5" font-weight="normal" fill="#fff" transform="translate(1052.06 270) scale(1.1599 1)" xml:space="preserve" >10.0</text>
<rect x="1042" y="275" width="7" height="1.4" fill="#fff"/>
<text x="0" y="0" font-family="Liberation Sans" font-size="15.5" font-weight="normal" fill="#fff" transform="translate(1052.06 281) scale(1.1599 1)" xml:space="preserve" >12.5</text>
<rect x="1042" y="286" width="7" height="1.4" fill="#fff"/>
<text x="0" y="0" font-family="Liberation Sans" font-size="15.5" font-weight="normal" fill="#fff" transform="translate(1052.06 292) scale(1.1599 1)" xml:space="preserve" >15.0</text>
<rect x="1042" y="297" width="7" height="1.4" fill="#fff"/>
<text x="0" y="0" font-family="Liberation Sans" font-size="15.5" font-weight="normal" fill="#fff" transform="translate(1052.06 303) scale(1.1599 1)" xml:space="preserve" >17.5</text>
<rect x="1042" y="308" width="7" height="1.4" fill="#fff"/>
<text x="0" y="0" font-family="Liberation Sans" font-size="15.5" font-weight="normal" fill="#fff" transform="translate(1052.62 314) scale(1.1412 1)" xml:space="preserve" >20.0</text>
<rect x="1042" y="319" width="7" height="1.4" fill="#fff"/>
<text x="0" y="0" font-family="Liberation Sans" font-size="15.5" font-weight="normal" fill="#fff" transform="translate(1052.62 325) scale(1.1412 1)" xml:space="preserve" >22.5</text>
<rect x="1042" y="330" width="7" height="1.4" fill="#fff"/>
<text x="0" y="0" font-family="Liberation Sans" font-size="15.5" font-weight="normal" fill="#fff" transform="translate(1052.62 336) scale(1.1412 1)" xml:space="preserve" >25.0</text>
<rect x="1042" y="341" width="7" height="1.4" fill="#fff"/>
<text x="0" y="0" font-family="Liberation Sans" font-size="15.5" font-weight="normal" fill="#fff" transform="translate(1052.62 347) scale(1.1412 1)" xml:space="preserve" >27.5</text>
<rect x="1042" y="352" width="7" height="1.4" fill="#fff"/>
<text x="0" y="0" font-family="Liberation Sans" font-size="15.5" font-weight="normal" fill="#fff" transform="translate(1052.80 358) scale(1.1351 1)" xml:space="preserve" >30.0</text>
<rect x="600" y="367" width="46" height="48" fill="#1a1a6a"/>
<rect x="600.5" y="367.5" width="45" height="47" fill="none" stroke="#8c8c8c"/>
<g transform="translate(600 367)">
<path d="M7.0 12.8 C7.5 12.3 8.4 10.7 10.0 9.8 C11.6 8.9 14.4 7.5 16.8 7.6 C19.2 7.7 22.3 9.5 24.6 10.2 C26.9 10.9 28.5 12.1 30.7 12.0 C32.9 11.9 37.1 9.3 37.7 9.8 C38.3 10.3 36.2 13.4 34.2 15.0 C32.2 16.6 28.1 17.7 25.5 19.3 C22.9 20.9 20.8 22.2 18.6 24.5 C16.4 26.8 14.3 29.5 12.5 33.2 C10.7 37.0 8.8 44.7 8.0 47.0" fill="none" stroke="#ffff00" stroke-width="1.9" stroke-linejoin="round"/>
</g>
<rect x="647" y="367" width="46" height="48" fill="#6c6c6c"/>
<rect x="647.5" y="367.5" width="45" height="47" fill="none" stroke="#8c8c8c"/>
<text x="0" y="0" font-family="Liberation Sans" font-size="7.5" font-weight="bold" fill="#e4e4e4" transform="translate(657.62 375.7) scale(0.9310 1)" xml:space="preserve" >CROSS</text>
<text x="0" y="0" font-family="Liberation Sans" font-size="7.5" font-weight="bold" fill="#e4e4e4" transform="translate(654.69 410.9) scale(0.9287 1)" xml:space="preserve" >SECTION</text>
<g transform="translate(647 367)">
<rect x="13" y="13.5" width="22" height="20" fill="url(#dg)"/>
<path d="M13.5 13.5 H35.5 V33.5 M4.5 17.5 V37.5 H25.5 V33.5 M4.5 17.5 L13.5 14 M20.5 10.5 H40.5 V30.5 L35.5 33.5 M25.5 37.5 L35.5 33.5 M13.5 13.5 L20.5 10.5 M35.5 13.5 L40.5 10.5 M24.5 13.5 V33.5" fill="none" stroke="#e4e4e4" stroke-width="1"/>
<path d="M6 36.5 L13 33.5" fill="none" stroke="#e4e4e4" stroke-width="1" stroke-dasharray="1 1.5"/>
</g>
<rect x="694" y="367" width="46" height="48" fill="#6c6c6c"/>
<rect x="694.5" y="367.5" width="45" height="47" fill="none" stroke="#8c8c8c"/>
<text x="0" y="0" font-family="Liberation Sans" font-size="7.5" font-weight="bold" fill="#e4e4e4" transform="translate(704.62 375.7) scale(0.9310 1)" xml:space="preserve" >CROSS</text>
<text x="0" y="0" font-family="Liberation Sans" font-size="7.5" font-weight="bold" fill="#e4e4e4" transform="translate(701.69 410.9) scale(0.9287 1)" xml:space="preserve" >SECTION</text>
<g transform="translate(694 367)">
<rect x="13" y="13.5" width="22" height="20" fill="url(#dg)"/>
<path d="M13.5 13.5 H35.5 V33.5 M4.5 17.5 V37.5 H25.5 V33.5 M4.5 17.5 L13.5 14 M20.5 10.5 H40.5 V30.5 L35.5 33.5 M25.5 37.5 L35.5 33.5 M13.5 13.5 L20.5 10.5 M35.5 13.5 L40.5 10.5 M24.5 13.5 V33.5" fill="none" stroke="#e4e4e4" stroke-width="1"/>
<path d="M6 36.5 L13 33.5" fill="none" stroke="#e4e4e4" stroke-width="1" stroke-dasharray="1 1.5"/>
</g>
<rect x="741" y="367" width="46" height="48" fill="#1a1a6a"/>
<rect x="741.5" y="367.5" width="45" height="47" fill="none" stroke="#8c8c8c"/>
<text x="0" y="0" font-family="Liberation Sans" font-size="7.5" font-weight="bold" fill="#ffff00" transform="translate(751.62 375.7) scale(0.9310 1)" xml:space="preserve" >CROSS</text>
<text x="0" y="0" font-family="Liberation Sans" font-size="7.5" font-weight="bold" fill="#ffff00" transform="translate(748.69 410.9) scale(0.9287 1)" xml:space="preserve" >SECTION</text>
<g transform="translate(741 367)">
<rect x="13" y="13.5" width="22" height="20" fill="url(#dy)"/>
<path d="M13.5 13.5 H35.5 V33.5 M4.5 17.5 V37.5 H25.5 V33.5 M4.5 17.5 L13.5 14 M20.5 10.5 H40.5 V30.5 L35.5 33.5 M25.5 37.5 L35.5 33.5 M13.5 13.5 L20.5 10.5 M35.5 13.5 L40.5 10.5 M24.5 13.5 V33.5" fill="none" stroke="#ffff00" stroke-width="1"/>
<path d="M6 36.5 L13 33.5" fill="none" stroke="#ffff00" stroke-width="1" stroke-dasharray="1 1.5"/>
</g>
<rect x="1101" y="480" width="31" height="20" fill="#e0e0e0"/>
<rect x="1102" y="481" width="29" height="18" fill="#006400"/>
<text x="0" y="0" font-family="Liberation Sans" font-size="12.5" font-weight="bold" fill="#e6e0e6" transform="translate(1098.09 493.8) scale(0.8147 1)" xml:space="preserve" >onbar</text>
<rect x="1045" y="699" width="78" height="77" fill="#000"/>
<path d="M1045 699h78v1h-78zM1045 775h78v1h-78zM1045 699h1v77h-1zM1122 699h1v77h-1z" fill="url(#dots)"/>
<rect x="1101" y="722" width="1.6" height="8" fill="#fff"/><rect x="1101" y="737" width="6" height="1" fill="#fff"/>
<path d="M1059 759.5h48" stroke="#fff" stroke-width="1.5" stroke-dasharray="1.5 1 2 1"/>
<rect x="594" y="419" width="507" height="340" fill="#000"/>
<path d="M594 419h507v1h-507zM594 758h507v1h-507zM594 419h1v340h-1zM1100 419h1v340h-1z" fill="url(#dots)"/>
<rect x="595" y="399" width="170" height="21" fill="#006400"/>
<path d="M595 399h170v1h-170zM595 419h170v1h-170zM595 399h1v21h-1zM764 399h1v21h-1z" fill="url(#dots)"/>
<rect x="598.5" y="402.5" width="14" height="14" fill="none" stroke="#e6e0e6" stroke-width="1"/>
<circle cx="605.5" cy="409.5" r="4.7" fill="#e6e0e6"/>
<rect x="617.5" y="402.5" width="14" height="14" fill="none" stroke="#e6e0e6" stroke-width="1"/>
<rect x="620.5" y="404.5" width="8" height="9.5" fill="none" stroke="#e6e0e6"/>
<path d="M629.2 406V414.8H622" fill="none" stroke="#e6e0e6" stroke-width="1.4"/>
<rect x="623" y="406.6" width="3.5" height="1" fill="#e6e0e6"/>
<rect x="623" y="408.8" width="3.5" height="1" fill="#e6e0e6"/>
<rect x="623" y="411.0" width="3.5" height="1" fill="#e6e0e6"/>
<text x="0" y="0" font-family="Liberation Sans" font-size="12.5" font-weight="bold" fill="#e6e0e6" transform="translate(639.87 413) scale(1.0333 1)" xml:space="preserve" >xsectb</text>
<rect x="728.5" y="402.5" width="14" height="14" fill="none" stroke="#e6e0e6" stroke-width="1"/>
<circle cx="735.5" cy="409.5" r="2.1" fill="none" stroke="#e6e0e6" stroke-width="1.1"/>
<rect x="747.5" y="402.5" width="14" height="14" fill="none" stroke="#e6e0e6" stroke-width="1"/>
<path d="M748 411.5h9v-9M748 407.5h4.5v-5" fill="none" stroke="#e6e0e6"/>
<text x="0" y="0" font-family="Liberation Sans" font-size="17.5" font-weight="normal" fill="#ffff00" transform="translate(605.73 437.4) scale(1.0979 1)" xml:space="preserve" >3-sep-1997,12:21:00</text>
<text x="0" y="0" font-family="Liberation Sans" font-size="17.5" font-weight="normal" fill="#fff" transform="translate(791.78 437.3) scale(1.0867 1)" xml:space="preserve" >Planar cross-section plot.  Contour</text>
<path d="M700 649 H757 V609 H830 V590 H845 V629 H880 V649 H918 V663 H700Z" fill="#078a14"/>
<path d="M756.9 620.9 L771.6 624.3 L790.8 609.0 L826.9 609.0 L830.3 607.4 L832.6 618.7 L835.9 645.8 L832.6 660.5 L825.8 662.7 L769.3 662.7 L762.6 650.3 L758.1 639.0Z" fill="#045a14"/>
<ellipse cx="792" cy="646" rx="6" ry="5" fill="#078a14"/>
<path d="M859.6 628.8 L880.0 628.8 L880.0 637.9 L872.1 642.4Z" fill="#045a14"/>
<path d="M852.9 662.7 L868.7 650.3 L877.7 662.7Z" fill="#045a14"/>
<path d="M895.8 649.2 L902.5 649.2 L899.1 662.7 L893.5 662.7Z" fill="#045a14"/>
<path d="M700 649h5l3 14h-8z" fill="#0a9a14"/>
<path d="M646 664.5h10M1026 664.5h-10M646 645.5h10M1026 645.5h-10M646 625.5h10M1026 625.5h-10M646 606.5h10M1026 606.5h-10M646 587.5h10M1026 587.5h-10M646 568.5h10M1026 568.5h-10M646 549.5h10M1026 549.5h-10M646 529.5h10M1026 529.5h-10M646 510.5h10M1026 510.5h-10M646 491.5h10M1026 491.5h-10M646 472.5h10M1026 472.5h-10M646 453.5h10M1026 453.5h-10M694.5 683v-8M694.5 442v8M741.5 683v-8M741.5 442v8M788.5 683v-8M788.5 442v8M836.5 683v-8M836.5 442v8M884.5 683v-8M884.5 442v8M931.5 683v-8M931.5 442v8M978.5 683v-8M978.5 442v8M646.5 442V683.5H1026.5V442.5H646" stroke="#fff" stroke-width="1" fill="none"/>
<path d="M1026 442.5h74" stroke="#a8a8a8" stroke-width="1"/>
<path d="M1025 707.5h76" stroke="#9a9a9a" stroke-width="1"/>
<text x="0" y="0" font-family="Liberation Sans" font-size="8.5" fill="#fff" text-anchor="end" transform="translate(643.5 452.6) scale(0.9 1)">2.4</text>
<text x="0" y="0" font-family="Liberation Sans" font-size="8.5" fill="#fff" text-anchor="end" transform="translate(643.5 491.0) scale(0.9 1)">2.0</text>
<text x="0" y="0" font-family="Liberation Sans" font-size="8.5" fill="#fff" text-anchor="end" transform="translate(643.5 529.4) scale(0.9 1)">1.6</text>
<text x="0" y="0" font-family="Liberation Sans" font-size="8.5" fill="#fff" text-anchor="end" transform="translate(643.5 567.8) scale(0.9 1)">1.2</text>
<text x="0" y="0" font-family="Liberation Sans" font-size="8.5" fill="#fff" text-anchor="end" transform="translate(643.5 606.2) scale(0.9 1)">0.8</text>
<text x="0" y="0" font-family="Liberation Sans" font-size="8.5" fill="#fff" text-anchor="end" transform="translate(643.5 644.6) scale(0.9 1)">0.4</text>
<text x="0" y="0" font-family="Liberation Sans" font-size="8.5" fill="#fff" text-anchor="end" transform="translate(643.5 683.0) scale(0.9 1)">0.0</text>
<text x="0" y="0" font-family="Liberation Sans" font-size="8.5" fill="#fff" text-anchor="middle" transform="translate(646.0 692.5) scale(0.9 1)">0.0</text>
<text x="0" y="0" font-family="Liberation Sans" font-size="8.5" fill="#fff" text-anchor="middle" transform="translate(740.8 692.5) scale(0.9 1)">1.3</text>
<text x="0" y="0" font-family="Liberation Sans" font-size="8.5" fill="#fff" text-anchor="middle" transform="translate(835.6 692.5) scale(0.9 1)">2.7</text>
<text x="0" y="0" font-family="Liberation Sans" font-size="8.5" fill="#fff" text-anchor="middle" transform="translate(930.4 692.5) scale(0.9 1)">4.0</text>
<text x="0" y="0" font-family="Liberation Sans" font-size="8.5" fill="#fff" text-anchor="middle" transform="translate(1025.2 692.5) scale(0.9 1)">5.4</text>
<text x="0" y="0" font-family="Liberation Sans" font-size="9" font-weight="normal" fill="#fff" transform="translate(811.23 701) scale(0.7904 1)" xml:space="preserve" >Distance in km</text>
<text x="0" y="0" font-family="Liberation Serif" font-size="11.5" font-weight="bold" fill="#fff" transform="translate(630 603) rotate(-90) scale(1.1471 1)">km above MSL</text>
<text x="0" y="0" font-family="Liberation Sans" font-size="17.5" font-weight="normal" fill="#fff" transform="translate(605.76 461.5) scale(1.0609 1)" xml:space="preserve" >of radialvelocity using: rhb_hires.</text>
<text x="0" y="0" font-family="Liberation Sans" font-size="12" font-weight="normal" fill="#fff" transform="translate(1026.14 460.5) scale(0.7910 1)" xml:space="preserve" >radialvelocity</text>
<rect x="1027" y="464" width="10" height="9" fill="#ff0000"/>
<rect x="1027" y="473" width="10" height="9" fill="#cc0000"/>
<rect x="1027" y="482" width="10" height="9" fill="#880000"/>
<rect x="1027" y="491" width="10" height="9" fill="#dd4400"/>
<rect x="1027" y="500" width="10" height="9" fill="#ff7700"/>
<rect x="1027" y="509" width="10" height="9" fill="#ff5050"/>
<rect x="1027" y="518" width="10" height="9" fill="#ff8080"/>
<rect x="1027" y="527" width="10" height="9" fill="#ffc0c0"/>
<rect x="1027" y="536" width="10" height="9" fill="#ffff00"/>
<rect x="1027" y="545" width="10" height="9" fill="#ffb020"/>
<rect x="1027" y="554" width="10" height="9" fill="#d89060"/>
<rect x="1027" y="563" width="10" height="9" fill="#a84a00"/>
<rect x="1027" y="572" width="10" height="9" fill="#b4b4b4"/>
<rect x="1027" y="581" width="10" height="9" fill="#005515"/>
<rect x="1027" y="590" width="10" height="9" fill="#008520"/>
<rect x="1027" y="599" width="10" height="9" fill="#00aa20"/>
<rect x="1027" y="608" width="10" height="9" fill="#00ff00"/>
<rect x="1027" y="617" width="10" height="9" fill="#00c0ff"/>
<rect x="1027" y="626" width="10" height="9" fill="#0080ff"/>
<rect x="1027" y="635" width="10" height="9" fill="#0000dd"/>
<rect x="1027" y="644" width="10" height="9" fill="#0018a8"/>
<rect x="1027" y="653" width="10" height="9" fill="#000080"/>
<rect x="1027" y="662" width="10" height="9" fill="#9090b8"/>
<rect x="1027" y="671" width="10" height="9" fill="#5a5a80"/>
<rect x="1027" y="680" width="10" height="9" fill="#707070"/>
<text x="0" y="0" font-family="Liberation Sans" font-size="13" fill="#fff" text-anchor="start" transform="translate(1042 474) scale(0.75 1)">12.0</text>
<text x="0" y="0" font-family="Liberation Sans" font-size="13" fill="#fff" text-anchor="start" transform="translate(1042 483) scale(0.75 1)">11.0</text>
<text x="0" y="0" font-family="Liberation Sans" font-size="13" fill="#fff" text-anchor="start" transform="translate(1042 492) scale(0.75 1)">10.0</text>
<text x="0" y="0" font-family="Liberation Sans" font-size="13" fill="#fff" text-anchor="start" transform="translate(1042 501) scale(0.75 1)">9.0</text>
<text x="0" y="0" font-family="Liberation Sans" font-size="13" fill="#fff" text-anchor="start" transform="translate(1042 510) scale(0.75 1)">8.0</text>
<text x="0" y="0" font-family="Liberation Sans" font-size="13" fill="#fff" text-anchor="start" transform="translate(1042 519) scale(0.75 1)">7.0</text>
<text x="0" y="0" font-family="Liberation Sans" font-size="13" fill="#fff" text-anchor="start" transform="translate(1042 528) scale(0.75 1)">6.0</text>
<text x="0" y="0" font-family="Liberation Sans" font-size="13" fill="#fff" text-anchor="start" transform="translate(1042 537) scale(0.75 1)">5.0</text>
<text x="0" y="0" font-family="Liberation Sans" font-size="13" fill="#fff" text-anchor="start" transform="translate(1042 546) scale(0.75 1)">4.0</text>
<text x="0" y="0" font-family="Liberation Sans" font-size="13" fill="#fff" text-anchor="start" transform="translate(1042 555) scale(0.75 1)">3.0</text>
<text x="0" y="0" font-family="Liberation Sans" font-size="13" fill="#fff" text-anchor="start" transform="translate(1042 564) scale(0.75 1)">2.0</text>
<text x="0" y="0" font-family="Liberation Sans" font-size="13" fill="#fff" text-anchor="start" transform="translate(1042 573) scale(0.75 1)">1.0</text>
<text x="0" y="0" font-family="Liberation Sans" font-size="13" fill="#fff" text-anchor="start" transform="translate(1042 582) scale(0.75 1)">0.0</text>
<text x="0" y="0" font-family="Liberation Sans" font-size="13" fill="#fff" text-anchor="start" transform="translate(1042 591) scale(0.75 1)">−1.0</text>
<text x="0" y="0" font-family="Liberation Sans" font-size="13" fill="#fff" text-anchor="start" transform="translate(1042 600) scale(0.75 1)">−2.0</text>
<text x="0" y="0" font-family="Liberation Sans" font-size="13" fill="#fff" text-anchor="start" transform="translate(1042 609) scale(0.75 1)">−3.0</text>
<text x="0" y="0" font-family="Liberation Sans" font-size="13" fill="#fff" text-anchor="start" transform="translate(1042 618) scale(0.75 1)">−4.0</text>
<text x="0" y="0" font-family="Liberation Sans" font-size="13" fill="#fff" text-anchor="start" transform="translate(1042 627) scale(0.75 1)">−5.0</text>
<text x="0" y="0" font-family="Liberation Sans" font-size="13" fill="#fff" text-anchor="start" transform="translate(1042 636) scale(0.75 1)">−6.0</text>
<text x="0" y="0" font-family="Liberation Sans" font-size="13" fill="#fff" text-anchor="start" transform="translate(1042 645) scale(0.75 1)">−7.0</text>
<text x="0" y="0" font-family="Liberation Sans" font-size="13" fill="#fff" text-anchor="start" transform="translate(1042 654) scale(0.75 1)">−8.0</text>
<text x="0" y="0" font-family="Liberation Sans" font-size="13" fill="#fff" text-anchor="start" transform="translate(1042 663) scale(0.75 1)">−9.0</text>
<text x="0" y="0" font-family="Liberation Sans" font-size="13" fill="#fff" text-anchor="start" transform="translate(1042 672) scale(0.75 1)">−10.0</text>
<text x="0" y="0" font-family="Liberation Sans" font-size="13" fill="#fff" text-anchor="start" transform="translate(1042 681) scale(0.75 1)">−11.0</text>
<text x="0" y="0" font-family="Liberation Sans" font-size="13" fill="#fff" text-anchor="start" transform="translate(1042 690) scale(0.75 1)">−12.0</text>
<rect x="601" y="708" width="46" height="48" fill="#1a1a6a"/>
<rect x="601.5" y="708.5" width="45" height="47" fill="none" stroke="#8c8c8c"/>
<g transform="translate(601 708)">
<path d="M7.2 12.6 C7.7 12.2 8.4 10.8 10.0 10.0 C11.6 9.2 14.3 7.9 16.7 7.9 C19.1 7.9 22.0 9.3 24.5 10.0 C27.0 10.7 29.3 11.8 31.5 11.8 C33.7 11.8 36.8 9.6 37.5 10.0 C38.2 10.4 37.7 12.8 35.8 14.4 C33.9 16.0 29.3 17.6 26.2 19.6 C23.2 21.6 20.2 24.1 17.6 26.5 C15.0 28.9 12.5 32.1 10.6 34.3 C8.7 36.5 6.0 39.0 6.3 39.5 C6.6 40.0 10.5 37.5 12.4 37.0 C14.3 36.5 15.0 36.1 17.6 36.5 C20.2 36.9 25.3 39.1 28.0 39.5 C30.7 39.9 32.3 39.4 34.0 38.7 C35.7 38.0 37.7 35.8 38.4 35.2" fill="none" stroke="#ffff00" stroke-width="1.9" stroke-linejoin="round"/>
</g>
<rect x="648" y="708" width="46" height="48" fill="#6c6c6c"/>
<rect x="648.5" y="708.5" width="45" height="47" fill="none" stroke="#8c8c8c"/>
<text x="0" y="0" font-family="Liberation Sans" font-size="7.5" font-weight="bold" fill="#e4e4e4" transform="translate(658.62 716.7) scale(0.9310 1)" xml:space="preserve" >CROSS</text>
<text x="0" y="0" font-family="Liberation Sans" font-size="7.5" font-weight="bold" fill="#e4e4e4" transform="translate(655.69 751.9) scale(0.9287 1)" xml:space="preserve" >SECTION</text>
<g transform="translate(648 708)">
<rect x="13" y="13.5" width="22" height="20" fill="url(#dg)"/>
<path d="M13.5 13.5 H35.5 V33.5 M4.5 17.5 V37.5 H25.5 V33.5 M4.5 17.5 L13.5 14 M20.5 10.5 H40.5 V30.5 L35.5 33.5 M25.5 37.5 L35.5 33.5 M13.5 13.5 L20.5 10.5 M35.5 13.5 L40.5 10.5 M24.5 13.5 V33.5" fill="none" stroke="#e4e4e4" stroke-width="1"/>
<path d="M6 36.5 L13 33.5" fill="none" stroke="#e4e4e4" stroke-width="1" stroke-dasharray="1 1.5"/>
</g>
<rect x="695" y="708" width="46" height="48" fill="#6c6c6c"/>
<rect x="695.5" y="708.5" width="45" height="47" fill="none" stroke="#8c8c8c"/>
<text x="0" y="0" font-family="Liberation Sans" font-size="7.5" font-weight="bold" fill="#e4e4e4" transform="translate(705.62 716.7) scale(0.9310 1)" xml:space="preserve" >CROSS</text>
<text x="0" y="0" font-family="Liberation Sans" font-size="7.5" font-weight="bold" fill="#e4e4e4" transform="translate(702.69 751.9) scale(0.9287 1)" xml:space="preserve" >SECTION</text>
<g transform="translate(695 708)">
<rect x="13" y="13.5" width="22" height="20" fill="url(#dg)"/>
<path d="M13.5 13.5 H35.5 V33.5 M4.5 17.5 V37.5 H25.5 V33.5 M4.5 17.5 L13.5 14 M20.5 10.5 H40.5 V30.5 L35.5 33.5 M25.5 37.5 L35.5 33.5 M13.5 13.5 L20.5 10.5 M35.5 13.5 L40.5 10.5 M24.5 13.5 V33.5" fill="none" stroke="#e4e4e4" stroke-width="1"/>
<path d="M6 36.5 L13 33.5" fill="none" stroke="#e4e4e4" stroke-width="1" stroke-dasharray="1 1.5"/>
</g>
<rect x="742" y="708" width="46" height="48" fill="#1a1a6a"/>
<rect x="742.5" y="708.5" width="45" height="47" fill="none" stroke="#8c8c8c"/>
<text x="0" y="0" font-family="Liberation Sans" font-size="7.5" font-weight="bold" fill="#ffff00" transform="translate(752.62 716.7) scale(0.9310 1)" xml:space="preserve" >CROSS</text>
<text x="0" y="0" font-family="Liberation Sans" font-size="7.5" font-weight="bold" fill="#ffff00" transform="translate(749.69 751.9) scale(0.9287 1)" xml:space="preserve" >SECTION</text>
<g transform="translate(742 708)">
<rect x="13" y="13.5" width="22" height="20" fill="url(#dy)"/>
<path d="M13.5 13.5 H35.5 V33.5 M4.5 17.5 V37.5 H25.5 V33.5 M4.5 17.5 L13.5 14 M20.5 10.5 H40.5 V30.5 L35.5 33.5 M25.5 37.5 L35.5 33.5 M13.5 13.5 L20.5 10.5 M35.5 13.5 L40.5 10.5 M24.5 13.5 V33.5" fill="none" stroke="#ffff00" stroke-width="1"/>
<path d="M6 36.5 L13 33.5" fill="none" stroke="#ffff00" stroke-width="1" stroke-dasharray="1 1.5"/>
</g>
<rect x="518" y="782" width="642" height="105" fill="#000"/>
<path d="M518 782h642v1h-642zM518 886h642v1h-642zM518 782h1v105h-1zM1159 782h1v105h-1z" fill="url(#dots)"/>
<rect x="518" y="762" width="175" height="21" fill="#006400"/>
<path d="M518 762h175v1h-175zM518 782h175v1h-175zM518 762h1v21h-1zM692 762h1v21h-1z" fill="url(#dots)"/>
<rect x="521.5" y="765.5" width="14" height="14" fill="none" stroke="#e6e0e6" stroke-width="1"/>
<circle cx="528.5" cy="772.5" r="4.7" fill="#e6e0e6"/>
<rect x="540.5" y="765.5" width="14" height="14" fill="none" stroke="#e6e0e6" stroke-width="1"/>
<rect x="543.5" y="767.5" width="8" height="9.5" fill="none" stroke="#e6e0e6"/>
<path d="M552.2 769V777.8H545" fill="none" stroke="#e6e0e6" stroke-width="1.4"/>
<rect x="546" y="769.6" width="3.5" height="1" fill="#e6e0e6"/>
<rect x="546" y="771.8" width="3.5" height="1" fill="#e6e0e6"/>
<rect x="546" y="774.0" width="3.5" height="1" fill="#e6e0e6"/>
<text x="0" y="0" font-family="Liberation Sans" font-size="12.5" font-weight="bold" fill="#e6e0e6" transform="translate(562.49 776) scale(1.0150 1)" xml:space="preserve" >overlay</text>
<rect x="656.5" y="765.5" width="14" height="14" fill="none" stroke="#e6e0e6" stroke-width="1"/>
<circle cx="663.5" cy="772.5" r="2.1" fill="none" stroke="#e6e0e6" stroke-width="1.1"/>
<rect x="675.5" y="765.5" width="14" height="14" fill="none" stroke="#e6e0e6" stroke-width="1"/>
<path d="M676 774.5h9v-9M676 770.5h4.5v-5" fill="none" stroke="#e6e0e6"/>
<text x="0" y="0" font-family="Liberation Sans" font-size="12.5" font-weight="bold" fill="#fff" transform="translate(527.08 803) scale(0.8189 1)" xml:space="preserve" >Data times for big2</text>
<rect x="630.5" y="789.5" width="29" height="21" fill="none" stroke="#fff" stroke-width="2"/>
<rect x="666.5" y="789.5" width="43.5" height="21" fill="none" stroke="#fff" stroke-width="2"/>
<text x="0" y="0" font-family="Liberation Sans" font-size="12.5" font-weight="normal" fill="#fff" transform="translate(633.63 805.3) scale(0.7670 1)" xml:space="preserve" >Help</text>
<text x="0" y="0" font-family="Liberation Sans" font-size="12.5" font-weight="normal" fill="#fff" transform="translate(669.50 805.3) scale(0.7976 1)" xml:space="preserve" >Dismiss</text>
<path d="M1160 814H525V880H1160" stroke="#fff" stroke-width="2" fill="none"/>
<text x="528" y="830.5" font-family="Liberation Mono" font-size="15" fill="#fff" stroke="#fff" stroke-width="0.45" xml:space="preserve">COMPONENT      PLATFORM   FIELD      ALTITUDE       TIME</text>
<text x="528" y="845" font-family="Liberation Mono" font-size="15" fill="#fff" stroke="#fff" stroke-width="0.45" xml:space="preserve">c_radar        rhb_hires  maxdz      1.00 km MSL    3-Sep-97,12:20:24</text>
</svg></body></html>
